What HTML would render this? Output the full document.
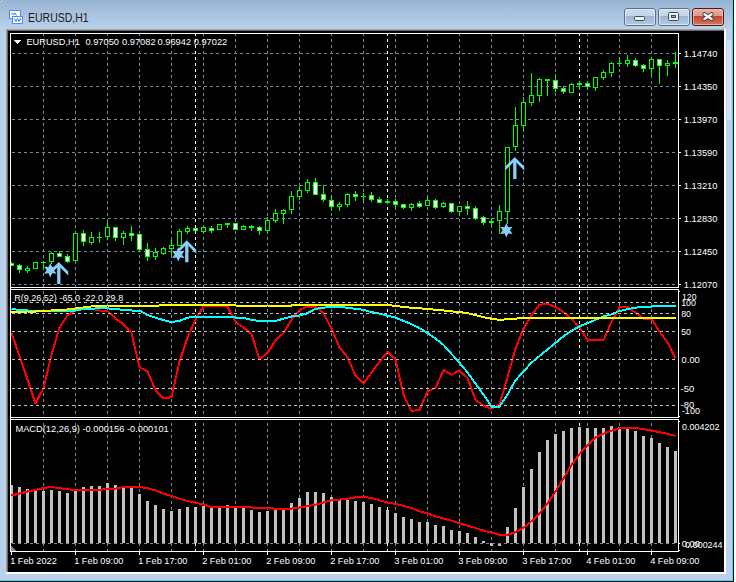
<!DOCTYPE html>
<html><head><meta charset="utf-8"><style>
html,body{margin:0;padding:0;width:736px;height:582px;overflow:hidden;background:#b9d1ea;}
#win{position:absolute;left:0;top:0;width:736px;height:582px;}
svg{position:absolute;left:0;top:0;}
text{font-family:"Liberation Sans",sans-serif;}
</style></head><body><div id="win">
<svg width="736" height="582" viewBox="0 0 736 582" shape-rendering="crispEdges">
<defs>
<linearGradient id="tb" x1="0" y1="0" x2="0" y2="1">
<stop offset="0" stop-color="#98b4d3"/><stop offset="1" stop-color="#bad2eb"/>
</linearGradient>
<linearGradient id="bh" x1="0" y1="0" x2="0" y2="1">
<stop offset="0" stop-color="#cddcee"/><stop offset="0.42" stop-color="#c3d5ea"/><stop offset="0.45" stop-color="#9ab4d3"/><stop offset="1" stop-color="#b8cde5"/>
</linearGradient>
<linearGradient id="ch" x1="0" y1="0" x2="0" y2="1">
<stop offset="0" stop-color="#eab0a4"/><stop offset="0.42" stop-color="#e39a8a"/><stop offset="0.45" stop-color="#c2452c"/><stop offset="1" stop-color="#d97a62"/>
</linearGradient>
</defs>
<rect x="0" y="0" width="736" height="582" fill="#b9d1ea"/>
<rect x="0" y="0" width="736" height="29" fill="url(#tb)"/>
<rect x="0" y="0" width="1" height="1" fill="#6e6e6e"/><rect x="1" y="0" width="1" height="1" fill="#eeeeee"/><rect x="0" y="1" width="1" height="1" fill="#eeeeee"/>
<rect x="726" y="29" width="6" height="551" fill="#bcd3eb"/>
<rect x="727" y="40" width="4" height="80" fill="#d2e2f2"/>
<rect x="732" y="0" width="1" height="581" fill="#3fd6f2"/>
<rect x="733" y="0" width="1" height="582" fill="#101010"/>
<rect x="734" y="0" width="2" height="582" fill="#ffffff"/>
<rect x="0" y="580" width="733" height="1" fill="#3fd6f2"/>
<rect x="0" y="581" width="734" height="1" fill="#101010"/>
<!-- client edge -->
<rect x="6" y="29" width="720" height="545" fill="#ffffff"/>
<rect x="6" y="29" width="718" height="543" fill="#a0a0a0"/>
<rect x="7" y="30" width="717" height="542" fill="#696969"/>
<rect x="8" y="31" width="716" height="541" fill="#000000"/>
<!-- title -->
<g id="icon">
<rect x="9.5" y="10.5" width="11" height="8" fill="#ffffff" stroke="#4d8cf5" stroke-width="1"/>
<rect x="12.5" y="16.5" width="10" height="7" fill="#ffffff" stroke="#4d8cf5" stroke-width="1"/>
<path d="M14.5 18.5L16 21.5L17.5 18.5L19 21.5L20.5 18.5L21 20" fill="none" stroke="#3d7be0" stroke-width="1" shape-rendering="geometricPrecision"/>
<path d="M11 14.5L12.5 13L13.5 15L15 13L16.5 15.5" fill="none" stroke="#3d7be0" stroke-width="1" shape-rendering="geometricPrecision"/>
</g>
<text x="28" y="22" font-size="12" fill="#1a1a1a" transform="translate(28 0) scale(0.875 1) translate(-28 0)">EURUSD,H1</text>
<!-- buttons -->
<rect x="624.5" y="8.5" width="31" height="17" rx="2.5" fill="url(#bh)" stroke="#5a6f8c" shape-rendering="geometricPrecision"/>
<rect x="658.5" y="8.5" width="31" height="17" rx="2.5" fill="url(#bh)" stroke="#5a6f8c" shape-rendering="geometricPrecision"/>
<rect x="692.5" y="8.5" width="31" height="17" rx="2.5" fill="url(#ch)" stroke="#4a1820" shape-rendering="geometricPrecision"/>
<rect x="625.5" y="9.5" width="29" height="15" rx="1.5" fill="none" stroke="#e8f0fa" stroke-opacity="0.7" shape-rendering="geometricPrecision"/>
<rect x="659.5" y="9.5" width="29" height="15" rx="1.5" fill="none" stroke="#e8f0fa" stroke-opacity="0.7" shape-rendering="geometricPrecision"/>
<rect x="693.5" y="9.5" width="29" height="15" rx="1.5" fill="none" stroke="#f4c8bc" stroke-opacity="0.7" shape-rendering="geometricPrecision"/>
<rect x="634.5" y="16.5" width="10" height="4" rx="1" fill="#f2f2f2" stroke="#3a4a5e" shape-rendering="geometricPrecision"/>
<rect x="668.5" y="12.5" width="10" height="8" rx="1" fill="#f2f2f2" stroke="#3a4a5e" shape-rendering="geometricPrecision"/>
<rect x="671.5" y="15.5" width="4" height="2" fill="#8aa4c4" stroke="#3a4a5e" shape-rendering="geometricPrecision"/>
<path d="M704.4 14.2 L711.6 19.0 M711.6 14.2 L704.4 19.0" stroke="#3a3a48" stroke-width="4.2" stroke-linecap="round" shape-rendering="geometricPrecision"/>
<path d="M704.4 14.2 L711.6 19.0 M711.6 14.2 L704.4 19.0" stroke="#f4f4f4" stroke-width="2.4" stroke-linecap="round" shape-rendering="geometricPrecision"/>
<path d="M14 40h7v1h-1v1h-1v1h-1v1h-1v-1h-1v-1h-1v-1h-1z" fill="#ffffff"/>
<!-- frames -->
<g fill="#ffffff">
<rect x="10" y="33" width="669" height="1"/>
<rect x="10" y="287" width="669" height="1"/>
<rect x="10" y="289" width="669" height="1"/>
<rect x="10" y="417" width="669" height="1"/>
<rect x="10" y="419" width="669" height="1"/>
<rect x="10" y="551" width="669" height="1"/>
<rect x="10" y="33" width="1" height="519"/>
<rect x="678" y="33" width="1" height="255"/>
<rect x="678" y="289" width="1" height="129"/>
<rect x="678" y="419" width="1" height="133"/>
</g>
<path d="M43 34h1v2h-1zM43 39h1v3h-1zM43 45h1v3h-1zM43 51h1v3h-1zM43 57h1v3h-1zM43 63h1v3h-1zM43 69h1v3h-1zM43 75h1v3h-1zM43 81h1v3h-1zM43 87h1v3h-1zM43 93h1v3h-1zM43 99h1v3h-1zM43 105h1v3h-1zM43 111h1v3h-1zM43 117h1v3h-1zM43 123h1v3h-1zM43 129h1v3h-1zM43 135h1v3h-1zM43 141h1v3h-1zM43 147h1v3h-1zM43 153h1v3h-1zM43 159h1v3h-1zM43 165h1v3h-1zM43 171h1v3h-1zM43 177h1v3h-1zM43 183h1v3h-1zM43 189h1v3h-1zM43 195h1v3h-1zM43 201h1v3h-1zM43 207h1v3h-1zM43 213h1v3h-1zM43 219h1v3h-1zM43 225h1v3h-1zM43 231h1v3h-1zM43 237h1v3h-1zM43 243h1v3h-1zM43 249h1v3h-1zM43 255h1v3h-1zM43 261h1v3h-1zM43 267h1v3h-1zM43 273h1v3h-1zM43 279h1v3h-1zM43 285h1v2h-1zM43 291h1v3h-1zM43 297h1v3h-1zM43 303h1v3h-1zM43 309h1v3h-1zM43 315h1v3h-1zM43 321h1v3h-1zM43 327h1v3h-1zM43 333h1v3h-1zM43 339h1v3h-1zM43 345h1v3h-1zM43 351h1v3h-1zM43 357h1v3h-1zM43 363h1v3h-1zM43 369h1v3h-1zM43 375h1v3h-1zM43 381h1v3h-1zM43 387h1v3h-1zM43 393h1v3h-1zM43 399h1v3h-1zM43 405h1v3h-1zM43 411h1v3h-1zM43 423h1v3h-1zM43 429h1v3h-1zM43 435h1v3h-1zM43 441h1v3h-1zM43 447h1v3h-1zM43 453h1v3h-1zM43 459h1v3h-1zM43 465h1v3h-1zM43 471h1v3h-1zM43 477h1v3h-1zM43 483h1v3h-1zM43 489h1v3h-1zM43 495h1v3h-1zM43 501h1v3h-1zM43 507h1v3h-1zM43 513h1v3h-1zM43 519h1v3h-1zM43 525h1v3h-1zM43 531h1v3h-1zM43 537h1v3h-1zM43 543h1v3h-1zM43 549h1v2h-1zM75 34h1v2h-1zM75 39h1v3h-1zM75 45h1v3h-1zM75 51h1v3h-1zM75 57h1v3h-1zM75 63h1v3h-1zM75 69h1v3h-1zM75 75h1v3h-1zM75 81h1v3h-1zM75 87h1v3h-1zM75 93h1v3h-1zM75 99h1v3h-1zM75 105h1v3h-1zM75 111h1v3h-1zM75 117h1v3h-1zM75 123h1v3h-1zM75 129h1v3h-1zM75 135h1v3h-1zM75 141h1v3h-1zM75 147h1v3h-1zM75 153h1v3h-1zM75 159h1v3h-1zM75 165h1v3h-1zM75 171h1v3h-1zM75 177h1v3h-1zM75 183h1v3h-1zM75 189h1v3h-1zM75 195h1v3h-1zM75 201h1v3h-1zM75 207h1v3h-1zM75 213h1v3h-1zM75 219h1v3h-1zM75 225h1v3h-1zM75 231h1v3h-1zM75 237h1v3h-1zM75 243h1v3h-1zM75 249h1v3h-1zM75 255h1v3h-1zM75 261h1v3h-1zM75 267h1v3h-1zM75 273h1v3h-1zM75 279h1v3h-1zM75 285h1v2h-1zM75 291h1v3h-1zM75 297h1v3h-1zM75 303h1v3h-1zM75 309h1v3h-1zM75 315h1v3h-1zM75 321h1v3h-1zM75 327h1v3h-1zM75 333h1v3h-1zM75 339h1v3h-1zM75 345h1v3h-1zM75 351h1v3h-1zM75 357h1v3h-1zM75 363h1v3h-1zM75 369h1v3h-1zM75 375h1v3h-1zM75 381h1v3h-1zM75 387h1v3h-1zM75 393h1v3h-1zM75 399h1v3h-1zM75 405h1v3h-1zM75 411h1v3h-1zM75 423h1v3h-1zM75 429h1v3h-1zM75 435h1v3h-1zM75 441h1v3h-1zM75 447h1v3h-1zM75 453h1v3h-1zM75 459h1v3h-1zM75 465h1v3h-1zM75 471h1v3h-1zM75 477h1v3h-1zM75 483h1v3h-1zM75 489h1v3h-1zM75 495h1v3h-1zM75 501h1v3h-1zM75 507h1v3h-1zM75 513h1v3h-1zM75 519h1v3h-1zM75 525h1v3h-1zM75 531h1v3h-1zM75 537h1v3h-1zM75 543h1v3h-1zM75 549h1v2h-1zM107 34h1v2h-1zM107 39h1v3h-1zM107 45h1v3h-1zM107 51h1v3h-1zM107 57h1v3h-1zM107 63h1v3h-1zM107 69h1v3h-1zM107 75h1v3h-1zM107 81h1v3h-1zM107 87h1v3h-1zM107 93h1v3h-1zM107 99h1v3h-1zM107 105h1v3h-1zM107 111h1v3h-1zM107 117h1v3h-1zM107 123h1v3h-1zM107 129h1v3h-1zM107 135h1v3h-1zM107 141h1v3h-1zM107 147h1v3h-1zM107 153h1v3h-1zM107 159h1v3h-1zM107 165h1v3h-1zM107 171h1v3h-1zM107 177h1v3h-1zM107 183h1v3h-1zM107 189h1v3h-1zM107 195h1v3h-1zM107 201h1v3h-1zM107 207h1v3h-1zM107 213h1v3h-1zM107 219h1v3h-1zM107 225h1v3h-1zM107 231h1v3h-1zM107 237h1v3h-1zM107 243h1v3h-1zM107 249h1v3h-1zM107 255h1v3h-1zM107 261h1v3h-1zM107 267h1v3h-1zM107 273h1v3h-1zM107 279h1v3h-1zM107 285h1v2h-1zM107 291h1v3h-1zM107 297h1v3h-1zM107 303h1v3h-1zM107 309h1v3h-1zM107 315h1v3h-1zM107 321h1v3h-1zM107 327h1v3h-1zM107 333h1v3h-1zM107 339h1v3h-1zM107 345h1v3h-1zM107 351h1v3h-1zM107 357h1v3h-1zM107 363h1v3h-1zM107 369h1v3h-1zM107 375h1v3h-1zM107 381h1v3h-1zM107 387h1v3h-1zM107 393h1v3h-1zM107 399h1v3h-1zM107 405h1v3h-1zM107 411h1v3h-1zM107 423h1v3h-1zM107 429h1v3h-1zM107 435h1v3h-1zM107 441h1v3h-1zM107 447h1v3h-1zM107 453h1v3h-1zM107 459h1v3h-1zM107 465h1v3h-1zM107 471h1v3h-1zM107 477h1v3h-1zM107 483h1v3h-1zM107 489h1v3h-1zM107 495h1v3h-1zM107 501h1v3h-1zM107 507h1v3h-1zM107 513h1v3h-1zM107 519h1v3h-1zM107 525h1v3h-1zM107 531h1v3h-1zM107 537h1v3h-1zM107 543h1v3h-1zM107 549h1v2h-1zM139 34h1v2h-1zM139 39h1v3h-1zM139 45h1v3h-1zM139 51h1v3h-1zM139 57h1v3h-1zM139 63h1v3h-1zM139 69h1v3h-1zM139 75h1v3h-1zM139 81h1v3h-1zM139 87h1v3h-1zM139 93h1v3h-1zM139 99h1v3h-1zM139 105h1v3h-1zM139 111h1v3h-1zM139 117h1v3h-1zM139 123h1v3h-1zM139 129h1v3h-1zM139 135h1v3h-1zM139 141h1v3h-1zM139 147h1v3h-1zM139 153h1v3h-1zM139 159h1v3h-1zM139 165h1v3h-1zM139 171h1v3h-1zM139 177h1v3h-1zM139 183h1v3h-1zM139 189h1v3h-1zM139 195h1v3h-1zM139 201h1v3h-1zM139 207h1v3h-1zM139 213h1v3h-1zM139 219h1v3h-1zM139 225h1v3h-1zM139 231h1v3h-1zM139 237h1v3h-1zM139 243h1v3h-1zM139 249h1v3h-1zM139 255h1v3h-1zM139 261h1v3h-1zM139 267h1v3h-1zM139 273h1v3h-1zM139 279h1v3h-1zM139 285h1v2h-1zM139 291h1v3h-1zM139 297h1v3h-1zM139 303h1v3h-1zM139 309h1v3h-1zM139 315h1v3h-1zM139 321h1v3h-1zM139 327h1v3h-1zM139 333h1v3h-1zM139 339h1v3h-1zM139 345h1v3h-1zM139 351h1v3h-1zM139 357h1v3h-1zM139 363h1v3h-1zM139 369h1v3h-1zM139 375h1v3h-1zM139 381h1v3h-1zM139 387h1v3h-1zM139 393h1v3h-1zM139 399h1v3h-1zM139 405h1v3h-1zM139 411h1v3h-1zM139 423h1v3h-1zM139 429h1v3h-1zM139 435h1v3h-1zM139 441h1v3h-1zM139 447h1v3h-1zM139 453h1v3h-1zM139 459h1v3h-1zM139 465h1v3h-1zM139 471h1v3h-1zM139 477h1v3h-1zM139 483h1v3h-1zM139 489h1v3h-1zM139 495h1v3h-1zM139 501h1v3h-1zM139 507h1v3h-1zM139 513h1v3h-1zM139 519h1v3h-1zM139 525h1v3h-1zM139 531h1v3h-1zM139 537h1v3h-1zM139 543h1v3h-1zM139 549h1v2h-1zM171 34h1v2h-1zM171 39h1v3h-1zM171 45h1v3h-1zM171 51h1v3h-1zM171 57h1v3h-1zM171 63h1v3h-1zM171 69h1v3h-1zM171 75h1v3h-1zM171 81h1v3h-1zM171 87h1v3h-1zM171 93h1v3h-1zM171 99h1v3h-1zM171 105h1v3h-1zM171 111h1v3h-1zM171 117h1v3h-1zM171 123h1v3h-1zM171 129h1v3h-1zM171 135h1v3h-1zM171 141h1v3h-1zM171 147h1v3h-1zM171 153h1v3h-1zM171 159h1v3h-1zM171 165h1v3h-1zM171 171h1v3h-1zM171 177h1v3h-1zM171 183h1v3h-1zM171 189h1v3h-1zM171 195h1v3h-1zM171 201h1v3h-1zM171 207h1v3h-1zM171 213h1v3h-1zM171 219h1v3h-1zM171 225h1v3h-1zM171 231h1v3h-1zM171 237h1v3h-1zM171 243h1v3h-1zM171 249h1v3h-1zM171 255h1v3h-1zM171 261h1v3h-1zM171 267h1v3h-1zM171 273h1v3h-1zM171 279h1v3h-1zM171 285h1v2h-1zM171 291h1v3h-1zM171 297h1v3h-1zM171 303h1v3h-1zM171 309h1v3h-1zM171 315h1v3h-1zM171 321h1v3h-1zM171 327h1v3h-1zM171 333h1v3h-1zM171 339h1v3h-1zM171 345h1v3h-1zM171 351h1v3h-1zM171 357h1v3h-1zM171 363h1v3h-1zM171 369h1v3h-1zM171 375h1v3h-1zM171 381h1v3h-1zM171 387h1v3h-1zM171 393h1v3h-1zM171 399h1v3h-1zM171 405h1v3h-1zM171 411h1v3h-1zM171 423h1v3h-1zM171 429h1v3h-1zM171 435h1v3h-1zM171 441h1v3h-1zM171 447h1v3h-1zM171 453h1v3h-1zM171 459h1v3h-1zM171 465h1v3h-1zM171 471h1v3h-1zM171 477h1v3h-1zM171 483h1v3h-1zM171 489h1v3h-1zM171 495h1v3h-1zM171 501h1v3h-1zM171 507h1v3h-1zM171 513h1v3h-1zM171 519h1v3h-1zM171 525h1v3h-1zM171 531h1v3h-1zM171 537h1v3h-1zM171 543h1v3h-1zM171 549h1v2h-1zM203 34h1v2h-1zM203 39h1v3h-1zM203 45h1v3h-1zM203 51h1v3h-1zM203 57h1v3h-1zM203 63h1v3h-1zM203 69h1v3h-1zM203 75h1v3h-1zM203 81h1v3h-1zM203 87h1v3h-1zM203 93h1v3h-1zM203 99h1v3h-1zM203 105h1v3h-1zM203 111h1v3h-1zM203 117h1v3h-1zM203 123h1v3h-1zM203 129h1v3h-1zM203 135h1v3h-1zM203 141h1v3h-1zM203 147h1v3h-1zM203 153h1v3h-1zM203 159h1v3h-1zM203 165h1v3h-1zM203 171h1v3h-1zM203 177h1v3h-1zM203 183h1v3h-1zM203 189h1v3h-1zM203 195h1v3h-1zM203 201h1v3h-1zM203 207h1v3h-1zM203 213h1v3h-1zM203 219h1v3h-1zM203 225h1v3h-1zM203 231h1v3h-1zM203 237h1v3h-1zM203 243h1v3h-1zM203 249h1v3h-1zM203 255h1v3h-1zM203 261h1v3h-1zM203 267h1v3h-1zM203 273h1v3h-1zM203 279h1v3h-1zM203 285h1v2h-1zM203 291h1v3h-1zM203 297h1v3h-1zM203 303h1v3h-1zM203 309h1v3h-1zM203 315h1v3h-1zM203 321h1v3h-1zM203 327h1v3h-1zM203 333h1v3h-1zM203 339h1v3h-1zM203 345h1v3h-1zM203 351h1v3h-1zM203 357h1v3h-1zM203 363h1v3h-1zM203 369h1v3h-1zM203 375h1v3h-1zM203 381h1v3h-1zM203 387h1v3h-1zM203 393h1v3h-1zM203 399h1v3h-1zM203 405h1v3h-1zM203 411h1v3h-1zM203 423h1v3h-1zM203 429h1v3h-1zM203 435h1v3h-1zM203 441h1v3h-1zM203 447h1v3h-1zM203 453h1v3h-1zM203 459h1v3h-1zM203 465h1v3h-1zM203 471h1v3h-1zM203 477h1v3h-1zM203 483h1v3h-1zM203 489h1v3h-1zM203 495h1v3h-1zM203 501h1v3h-1zM203 507h1v3h-1zM203 513h1v3h-1zM203 519h1v3h-1zM203 525h1v3h-1zM203 531h1v3h-1zM203 537h1v3h-1zM203 543h1v3h-1zM203 549h1v2h-1zM235 34h1v2h-1zM235 39h1v3h-1zM235 45h1v3h-1zM235 51h1v3h-1zM235 57h1v3h-1zM235 63h1v3h-1zM235 69h1v3h-1zM235 75h1v3h-1zM235 81h1v3h-1zM235 87h1v3h-1zM235 93h1v3h-1zM235 99h1v3h-1zM235 105h1v3h-1zM235 111h1v3h-1zM235 117h1v3h-1zM235 123h1v3h-1zM235 129h1v3h-1zM235 135h1v3h-1zM235 141h1v3h-1zM235 147h1v3h-1zM235 153h1v3h-1zM235 159h1v3h-1zM235 165h1v3h-1zM235 171h1v3h-1zM235 177h1v3h-1zM235 183h1v3h-1zM235 189h1v3h-1zM235 195h1v3h-1zM235 201h1v3h-1zM235 207h1v3h-1zM235 213h1v3h-1zM235 219h1v3h-1zM235 225h1v3h-1zM235 231h1v3h-1zM235 237h1v3h-1zM235 243h1v3h-1zM235 249h1v3h-1zM235 255h1v3h-1zM235 261h1v3h-1zM235 267h1v3h-1zM235 273h1v3h-1zM235 279h1v3h-1zM235 285h1v2h-1zM235 291h1v3h-1zM235 297h1v3h-1zM235 303h1v3h-1zM235 309h1v3h-1zM235 315h1v3h-1zM235 321h1v3h-1zM235 327h1v3h-1zM235 333h1v3h-1zM235 339h1v3h-1zM235 345h1v3h-1zM235 351h1v3h-1zM235 357h1v3h-1zM235 363h1v3h-1zM235 369h1v3h-1zM235 375h1v3h-1zM235 381h1v3h-1zM235 387h1v3h-1zM235 393h1v3h-1zM235 399h1v3h-1zM235 405h1v3h-1zM235 411h1v3h-1zM235 423h1v3h-1zM235 429h1v3h-1zM235 435h1v3h-1zM235 441h1v3h-1zM235 447h1v3h-1zM235 453h1v3h-1zM235 459h1v3h-1zM235 465h1v3h-1zM235 471h1v3h-1zM235 477h1v3h-1zM235 483h1v3h-1zM235 489h1v3h-1zM235 495h1v3h-1zM235 501h1v3h-1zM235 507h1v3h-1zM235 513h1v3h-1zM235 519h1v3h-1zM235 525h1v3h-1zM235 531h1v3h-1zM235 537h1v3h-1zM235 543h1v3h-1zM235 549h1v2h-1zM267 34h1v2h-1zM267 39h1v3h-1zM267 45h1v3h-1zM267 51h1v3h-1zM267 57h1v3h-1zM267 63h1v3h-1zM267 69h1v3h-1zM267 75h1v3h-1zM267 81h1v3h-1zM267 87h1v3h-1zM267 93h1v3h-1zM267 99h1v3h-1zM267 105h1v3h-1zM267 111h1v3h-1zM267 117h1v3h-1zM267 123h1v3h-1zM267 129h1v3h-1zM267 135h1v3h-1zM267 141h1v3h-1zM267 147h1v3h-1zM267 153h1v3h-1zM267 159h1v3h-1zM267 165h1v3h-1zM267 171h1v3h-1zM267 177h1v3h-1zM267 183h1v3h-1zM267 189h1v3h-1zM267 195h1v3h-1zM267 201h1v3h-1zM267 207h1v3h-1zM267 213h1v3h-1zM267 219h1v3h-1zM267 225h1v3h-1zM267 231h1v3h-1zM267 237h1v3h-1zM267 243h1v3h-1zM267 249h1v3h-1zM267 255h1v3h-1zM267 261h1v3h-1zM267 267h1v3h-1zM267 273h1v3h-1zM267 279h1v3h-1zM267 285h1v2h-1zM267 291h1v3h-1zM267 297h1v3h-1zM267 303h1v3h-1zM267 309h1v3h-1zM267 315h1v3h-1zM267 321h1v3h-1zM267 327h1v3h-1zM267 333h1v3h-1zM267 339h1v3h-1zM267 345h1v3h-1zM267 351h1v3h-1zM267 357h1v3h-1zM267 363h1v3h-1zM267 369h1v3h-1zM267 375h1v3h-1zM267 381h1v3h-1zM267 387h1v3h-1zM267 393h1v3h-1zM267 399h1v3h-1zM267 405h1v3h-1zM267 411h1v3h-1zM267 423h1v3h-1zM267 429h1v3h-1zM267 435h1v3h-1zM267 441h1v3h-1zM267 447h1v3h-1zM267 453h1v3h-1zM267 459h1v3h-1zM267 465h1v3h-1zM267 471h1v3h-1zM267 477h1v3h-1zM267 483h1v3h-1zM267 489h1v3h-1zM267 495h1v3h-1zM267 501h1v3h-1zM267 507h1v3h-1zM267 513h1v3h-1zM267 519h1v3h-1zM267 525h1v3h-1zM267 531h1v3h-1zM267 537h1v3h-1zM267 543h1v3h-1zM267 549h1v2h-1zM299 34h1v2h-1zM299 39h1v3h-1zM299 45h1v3h-1zM299 51h1v3h-1zM299 57h1v3h-1zM299 63h1v3h-1zM299 69h1v3h-1zM299 75h1v3h-1zM299 81h1v3h-1zM299 87h1v3h-1zM299 93h1v3h-1zM299 99h1v3h-1zM299 105h1v3h-1zM299 111h1v3h-1zM299 117h1v3h-1zM299 123h1v3h-1zM299 129h1v3h-1zM299 135h1v3h-1zM299 141h1v3h-1zM299 147h1v3h-1zM299 153h1v3h-1zM299 159h1v3h-1zM299 165h1v3h-1zM299 171h1v3h-1zM299 177h1v3h-1zM299 183h1v3h-1zM299 189h1v3h-1zM299 195h1v3h-1zM299 201h1v3h-1zM299 207h1v3h-1zM299 213h1v3h-1zM299 219h1v3h-1zM299 225h1v3h-1zM299 231h1v3h-1zM299 237h1v3h-1zM299 243h1v3h-1zM299 249h1v3h-1zM299 255h1v3h-1zM299 261h1v3h-1zM299 267h1v3h-1zM299 273h1v3h-1zM299 279h1v3h-1zM299 285h1v2h-1zM299 291h1v3h-1zM299 297h1v3h-1zM299 303h1v3h-1zM299 309h1v3h-1zM299 315h1v3h-1zM299 321h1v3h-1zM299 327h1v3h-1zM299 333h1v3h-1zM299 339h1v3h-1zM299 345h1v3h-1zM299 351h1v3h-1zM299 357h1v3h-1zM299 363h1v3h-1zM299 369h1v3h-1zM299 375h1v3h-1zM299 381h1v3h-1zM299 387h1v3h-1zM299 393h1v3h-1zM299 399h1v3h-1zM299 405h1v3h-1zM299 411h1v3h-1zM299 423h1v3h-1zM299 429h1v3h-1zM299 435h1v3h-1zM299 441h1v3h-1zM299 447h1v3h-1zM299 453h1v3h-1zM299 459h1v3h-1zM299 465h1v3h-1zM299 471h1v3h-1zM299 477h1v3h-1zM299 483h1v3h-1zM299 489h1v3h-1zM299 495h1v3h-1zM299 501h1v3h-1zM299 507h1v3h-1zM299 513h1v3h-1zM299 519h1v3h-1zM299 525h1v3h-1zM299 531h1v3h-1zM299 537h1v3h-1zM299 543h1v3h-1zM299 549h1v2h-1zM331 34h1v2h-1zM331 39h1v3h-1zM331 45h1v3h-1zM331 51h1v3h-1zM331 57h1v3h-1zM331 63h1v3h-1zM331 69h1v3h-1zM331 75h1v3h-1zM331 81h1v3h-1zM331 87h1v3h-1zM331 93h1v3h-1zM331 99h1v3h-1zM331 105h1v3h-1zM331 111h1v3h-1zM331 117h1v3h-1zM331 123h1v3h-1zM331 129h1v3h-1zM331 135h1v3h-1zM331 141h1v3h-1zM331 147h1v3h-1zM331 153h1v3h-1zM331 159h1v3h-1zM331 165h1v3h-1zM331 171h1v3h-1zM331 177h1v3h-1zM331 183h1v3h-1zM331 189h1v3h-1zM331 195h1v3h-1zM331 201h1v3h-1zM331 207h1v3h-1zM331 213h1v3h-1zM331 219h1v3h-1zM331 225h1v3h-1zM331 231h1v3h-1zM331 237h1v3h-1zM331 243h1v3h-1zM331 249h1v3h-1zM331 255h1v3h-1zM331 261h1v3h-1zM331 267h1v3h-1zM331 273h1v3h-1zM331 279h1v3h-1zM331 285h1v2h-1zM331 291h1v3h-1zM331 297h1v3h-1zM331 303h1v3h-1zM331 309h1v3h-1zM331 315h1v3h-1zM331 321h1v3h-1zM331 327h1v3h-1zM331 333h1v3h-1zM331 339h1v3h-1zM331 345h1v3h-1zM331 351h1v3h-1zM331 357h1v3h-1zM331 363h1v3h-1zM331 369h1v3h-1zM331 375h1v3h-1zM331 381h1v3h-1zM331 387h1v3h-1zM331 393h1v3h-1zM331 399h1v3h-1zM331 405h1v3h-1zM331 411h1v3h-1zM331 423h1v3h-1zM331 429h1v3h-1zM331 435h1v3h-1zM331 441h1v3h-1zM331 447h1v3h-1zM331 453h1v3h-1zM331 459h1v3h-1zM331 465h1v3h-1zM331 471h1v3h-1zM331 477h1v3h-1zM331 483h1v3h-1zM331 489h1v3h-1zM331 495h1v3h-1zM331 501h1v3h-1zM331 507h1v3h-1zM331 513h1v3h-1zM331 519h1v3h-1zM331 525h1v3h-1zM331 531h1v3h-1zM331 537h1v3h-1zM331 543h1v3h-1zM331 549h1v2h-1zM363 34h1v2h-1zM363 39h1v3h-1zM363 45h1v3h-1zM363 51h1v3h-1zM363 57h1v3h-1zM363 63h1v3h-1zM363 69h1v3h-1zM363 75h1v3h-1zM363 81h1v3h-1zM363 87h1v3h-1zM363 93h1v3h-1zM363 99h1v3h-1zM363 105h1v3h-1zM363 111h1v3h-1zM363 117h1v3h-1zM363 123h1v3h-1zM363 129h1v3h-1zM363 135h1v3h-1zM363 141h1v3h-1zM363 147h1v3h-1zM363 153h1v3h-1zM363 159h1v3h-1zM363 165h1v3h-1zM363 171h1v3h-1zM363 177h1v3h-1zM363 183h1v3h-1zM363 189h1v3h-1zM363 195h1v3h-1zM363 201h1v3h-1zM363 207h1v3h-1zM363 213h1v3h-1zM363 219h1v3h-1zM363 225h1v3h-1zM363 231h1v3h-1zM363 237h1v3h-1zM363 243h1v3h-1zM363 249h1v3h-1zM363 255h1v3h-1zM363 261h1v3h-1zM363 267h1v3h-1zM363 273h1v3h-1zM363 279h1v3h-1zM363 285h1v2h-1zM363 291h1v3h-1zM363 297h1v3h-1zM363 303h1v3h-1zM363 309h1v3h-1zM363 315h1v3h-1zM363 321h1v3h-1zM363 327h1v3h-1zM363 333h1v3h-1zM363 339h1v3h-1zM363 345h1v3h-1zM363 351h1v3h-1zM363 357h1v3h-1zM363 363h1v3h-1zM363 369h1v3h-1zM363 375h1v3h-1zM363 381h1v3h-1zM363 387h1v3h-1zM363 393h1v3h-1zM363 399h1v3h-1zM363 405h1v3h-1zM363 411h1v3h-1zM363 423h1v3h-1zM363 429h1v3h-1zM363 435h1v3h-1zM363 441h1v3h-1zM363 447h1v3h-1zM363 453h1v3h-1zM363 459h1v3h-1zM363 465h1v3h-1zM363 471h1v3h-1zM363 477h1v3h-1zM363 483h1v3h-1zM363 489h1v3h-1zM363 495h1v3h-1zM363 501h1v3h-1zM363 507h1v3h-1zM363 513h1v3h-1zM363 519h1v3h-1zM363 525h1v3h-1zM363 531h1v3h-1zM363 537h1v3h-1zM363 543h1v3h-1zM363 549h1v2h-1zM395 34h1v2h-1zM395 39h1v3h-1zM395 45h1v3h-1zM395 51h1v3h-1zM395 57h1v3h-1zM395 63h1v3h-1zM395 69h1v3h-1zM395 75h1v3h-1zM395 81h1v3h-1zM395 87h1v3h-1zM395 93h1v3h-1zM395 99h1v3h-1zM395 105h1v3h-1zM395 111h1v3h-1zM395 117h1v3h-1zM395 123h1v3h-1zM395 129h1v3h-1zM395 135h1v3h-1zM395 141h1v3h-1zM395 147h1v3h-1zM395 153h1v3h-1zM395 159h1v3h-1zM395 165h1v3h-1zM395 171h1v3h-1zM395 177h1v3h-1zM395 183h1v3h-1zM395 189h1v3h-1zM395 195h1v3h-1zM395 201h1v3h-1zM395 207h1v3h-1zM395 213h1v3h-1zM395 219h1v3h-1zM395 225h1v3h-1zM395 231h1v3h-1zM395 237h1v3h-1zM395 243h1v3h-1zM395 249h1v3h-1zM395 255h1v3h-1zM395 261h1v3h-1zM395 267h1v3h-1zM395 273h1v3h-1zM395 279h1v3h-1zM395 285h1v2h-1zM395 291h1v3h-1zM395 297h1v3h-1zM395 303h1v3h-1zM395 309h1v3h-1zM395 315h1v3h-1zM395 321h1v3h-1zM395 327h1v3h-1zM395 333h1v3h-1zM395 339h1v3h-1zM395 345h1v3h-1zM395 351h1v3h-1zM395 357h1v3h-1zM395 363h1v3h-1zM395 369h1v3h-1zM395 375h1v3h-1zM395 381h1v3h-1zM395 387h1v3h-1zM395 393h1v3h-1zM395 399h1v3h-1zM395 405h1v3h-1zM395 411h1v3h-1zM395 423h1v3h-1zM395 429h1v3h-1zM395 435h1v3h-1zM395 441h1v3h-1zM395 447h1v3h-1zM395 453h1v3h-1zM395 459h1v3h-1zM395 465h1v3h-1zM395 471h1v3h-1zM395 477h1v3h-1zM395 483h1v3h-1zM395 489h1v3h-1zM395 495h1v3h-1zM395 501h1v3h-1zM395 507h1v3h-1zM395 513h1v3h-1zM395 519h1v3h-1zM395 525h1v3h-1zM395 531h1v3h-1zM395 537h1v3h-1zM395 543h1v3h-1zM395 549h1v2h-1zM427 34h1v2h-1zM427 39h1v3h-1zM427 45h1v3h-1zM427 51h1v3h-1zM427 57h1v3h-1zM427 63h1v3h-1zM427 69h1v3h-1zM427 75h1v3h-1zM427 81h1v3h-1zM427 87h1v3h-1zM427 93h1v3h-1zM427 99h1v3h-1zM427 105h1v3h-1zM427 111h1v3h-1zM427 117h1v3h-1zM427 123h1v3h-1zM427 129h1v3h-1zM427 135h1v3h-1zM427 141h1v3h-1zM427 147h1v3h-1zM427 153h1v3h-1zM427 159h1v3h-1zM427 165h1v3h-1zM427 171h1v3h-1zM427 177h1v3h-1zM427 183h1v3h-1zM427 189h1v3h-1zM427 195h1v3h-1zM427 201h1v3h-1zM427 207h1v3h-1zM427 213h1v3h-1zM427 219h1v3h-1zM427 225h1v3h-1zM427 231h1v3h-1zM427 237h1v3h-1zM427 243h1v3h-1zM427 249h1v3h-1zM427 255h1v3h-1zM427 261h1v3h-1zM427 267h1v3h-1zM427 273h1v3h-1zM427 279h1v3h-1zM427 285h1v2h-1zM427 291h1v3h-1zM427 297h1v3h-1zM427 303h1v3h-1zM427 309h1v3h-1zM427 315h1v3h-1zM427 321h1v3h-1zM427 327h1v3h-1zM427 333h1v3h-1zM427 339h1v3h-1zM427 345h1v3h-1zM427 351h1v3h-1zM427 357h1v3h-1zM427 363h1v3h-1zM427 369h1v3h-1zM427 375h1v3h-1zM427 381h1v3h-1zM427 387h1v3h-1zM427 393h1v3h-1zM427 399h1v3h-1zM427 405h1v3h-1zM427 411h1v3h-1zM427 423h1v3h-1zM427 429h1v3h-1zM427 435h1v3h-1zM427 441h1v3h-1zM427 447h1v3h-1zM427 453h1v3h-1zM427 459h1v3h-1zM427 465h1v3h-1zM427 471h1v3h-1zM427 477h1v3h-1zM427 483h1v3h-1zM427 489h1v3h-1zM427 495h1v3h-1zM427 501h1v3h-1zM427 507h1v3h-1zM427 513h1v3h-1zM427 519h1v3h-1zM427 525h1v3h-1zM427 531h1v3h-1zM427 537h1v3h-1zM427 543h1v3h-1zM427 549h1v2h-1zM459 34h1v2h-1zM459 39h1v3h-1zM459 45h1v3h-1zM459 51h1v3h-1zM459 57h1v3h-1zM459 63h1v3h-1zM459 69h1v3h-1zM459 75h1v3h-1zM459 81h1v3h-1zM459 87h1v3h-1zM459 93h1v3h-1zM459 99h1v3h-1zM459 105h1v3h-1zM459 111h1v3h-1zM459 117h1v3h-1zM459 123h1v3h-1zM459 129h1v3h-1zM459 135h1v3h-1zM459 141h1v3h-1zM459 147h1v3h-1zM459 153h1v3h-1zM459 159h1v3h-1zM459 165h1v3h-1zM459 171h1v3h-1zM459 177h1v3h-1zM459 183h1v3h-1zM459 189h1v3h-1zM459 195h1v3h-1zM459 201h1v3h-1zM459 207h1v3h-1zM459 213h1v3h-1zM459 219h1v3h-1zM459 225h1v3h-1zM459 231h1v3h-1zM459 237h1v3h-1zM459 243h1v3h-1zM459 249h1v3h-1zM459 255h1v3h-1zM459 261h1v3h-1zM459 267h1v3h-1zM459 273h1v3h-1zM459 279h1v3h-1zM459 285h1v2h-1zM459 291h1v3h-1zM459 297h1v3h-1zM459 303h1v3h-1zM459 309h1v3h-1zM459 315h1v3h-1zM459 321h1v3h-1zM459 327h1v3h-1zM459 333h1v3h-1zM459 339h1v3h-1zM459 345h1v3h-1zM459 351h1v3h-1zM459 357h1v3h-1zM459 363h1v3h-1zM459 369h1v3h-1zM459 375h1v3h-1zM459 381h1v3h-1zM459 387h1v3h-1zM459 393h1v3h-1zM459 399h1v3h-1zM459 405h1v3h-1zM459 411h1v3h-1zM459 423h1v3h-1zM459 429h1v3h-1zM459 435h1v3h-1zM459 441h1v3h-1zM459 447h1v3h-1zM459 453h1v3h-1zM459 459h1v3h-1zM459 465h1v3h-1zM459 471h1v3h-1zM459 477h1v3h-1zM459 483h1v3h-1zM459 489h1v3h-1zM459 495h1v3h-1zM459 501h1v3h-1zM459 507h1v3h-1zM459 513h1v3h-1zM459 519h1v3h-1zM459 525h1v3h-1zM459 531h1v3h-1zM459 537h1v3h-1zM459 543h1v3h-1zM459 549h1v2h-1zM491 34h1v2h-1zM491 39h1v3h-1zM491 45h1v3h-1zM491 51h1v3h-1zM491 57h1v3h-1zM491 63h1v3h-1zM491 69h1v3h-1zM491 75h1v3h-1zM491 81h1v3h-1zM491 87h1v3h-1zM491 93h1v3h-1zM491 99h1v3h-1zM491 105h1v3h-1zM491 111h1v3h-1zM491 117h1v3h-1zM491 123h1v3h-1zM491 129h1v3h-1zM491 135h1v3h-1zM491 141h1v3h-1zM491 147h1v3h-1zM491 153h1v3h-1zM491 159h1v3h-1zM491 165h1v3h-1zM491 171h1v3h-1zM491 177h1v3h-1zM491 183h1v3h-1zM491 189h1v3h-1zM491 195h1v3h-1zM491 201h1v3h-1zM491 207h1v3h-1zM491 213h1v3h-1zM491 219h1v3h-1zM491 225h1v3h-1zM491 231h1v3h-1zM491 237h1v3h-1zM491 243h1v3h-1zM491 249h1v3h-1zM491 255h1v3h-1zM491 261h1v3h-1zM491 267h1v3h-1zM491 273h1v3h-1zM491 279h1v3h-1zM491 285h1v2h-1zM491 291h1v3h-1zM491 297h1v3h-1zM491 303h1v3h-1zM491 309h1v3h-1zM491 315h1v3h-1zM491 321h1v3h-1zM491 327h1v3h-1zM491 333h1v3h-1zM491 339h1v3h-1zM491 345h1v3h-1zM491 351h1v3h-1zM491 357h1v3h-1zM491 363h1v3h-1zM491 369h1v3h-1zM491 375h1v3h-1zM491 381h1v3h-1zM491 387h1v3h-1zM491 393h1v3h-1zM491 399h1v3h-1zM491 405h1v3h-1zM491 411h1v3h-1zM491 423h1v3h-1zM491 429h1v3h-1zM491 435h1v3h-1zM491 441h1v3h-1zM491 447h1v3h-1zM491 453h1v3h-1zM491 459h1v3h-1zM491 465h1v3h-1zM491 471h1v3h-1zM491 477h1v3h-1zM491 483h1v3h-1zM491 489h1v3h-1zM491 495h1v3h-1zM491 501h1v3h-1zM491 507h1v3h-1zM491 513h1v3h-1zM491 519h1v3h-1zM491 525h1v3h-1zM491 531h1v3h-1zM491 537h1v3h-1zM491 543h1v3h-1zM491 549h1v2h-1zM523 34h1v2h-1zM523 39h1v3h-1zM523 45h1v3h-1zM523 51h1v3h-1zM523 57h1v3h-1zM523 63h1v3h-1zM523 69h1v3h-1zM523 75h1v3h-1zM523 81h1v3h-1zM523 87h1v3h-1zM523 93h1v3h-1zM523 99h1v3h-1zM523 105h1v3h-1zM523 111h1v3h-1zM523 117h1v3h-1zM523 123h1v3h-1zM523 129h1v3h-1zM523 135h1v3h-1zM523 141h1v3h-1zM523 147h1v3h-1zM523 153h1v3h-1zM523 159h1v3h-1zM523 165h1v3h-1zM523 171h1v3h-1zM523 177h1v3h-1zM523 183h1v3h-1zM523 189h1v3h-1zM523 195h1v3h-1zM523 201h1v3h-1zM523 207h1v3h-1zM523 213h1v3h-1zM523 219h1v3h-1zM523 225h1v3h-1zM523 231h1v3h-1zM523 237h1v3h-1zM523 243h1v3h-1zM523 249h1v3h-1zM523 255h1v3h-1zM523 261h1v3h-1zM523 267h1v3h-1zM523 273h1v3h-1zM523 279h1v3h-1zM523 285h1v2h-1zM523 291h1v3h-1zM523 297h1v3h-1zM523 303h1v3h-1zM523 309h1v3h-1zM523 315h1v3h-1zM523 321h1v3h-1zM523 327h1v3h-1zM523 333h1v3h-1zM523 339h1v3h-1zM523 345h1v3h-1zM523 351h1v3h-1zM523 357h1v3h-1zM523 363h1v3h-1zM523 369h1v3h-1zM523 375h1v3h-1zM523 381h1v3h-1zM523 387h1v3h-1zM523 393h1v3h-1zM523 399h1v3h-1zM523 405h1v3h-1zM523 411h1v3h-1zM523 423h1v3h-1zM523 429h1v3h-1zM523 435h1v3h-1zM523 441h1v3h-1zM523 447h1v3h-1zM523 453h1v3h-1zM523 459h1v3h-1zM523 465h1v3h-1zM523 471h1v3h-1zM523 477h1v3h-1zM523 483h1v3h-1zM523 489h1v3h-1zM523 495h1v3h-1zM523 501h1v3h-1zM523 507h1v3h-1zM523 513h1v3h-1zM523 519h1v3h-1zM523 525h1v3h-1zM523 531h1v3h-1zM523 537h1v3h-1zM523 543h1v3h-1zM523 549h1v2h-1zM555 34h1v2h-1zM555 39h1v3h-1zM555 45h1v3h-1zM555 51h1v3h-1zM555 57h1v3h-1zM555 63h1v3h-1zM555 69h1v3h-1zM555 75h1v3h-1zM555 81h1v3h-1zM555 87h1v3h-1zM555 93h1v3h-1zM555 99h1v3h-1zM555 105h1v3h-1zM555 111h1v3h-1zM555 117h1v3h-1zM555 123h1v3h-1zM555 129h1v3h-1zM555 135h1v3h-1zM555 141h1v3h-1zM555 147h1v3h-1zM555 153h1v3h-1zM555 159h1v3h-1zM555 165h1v3h-1zM555 171h1v3h-1zM555 177h1v3h-1zM555 183h1v3h-1zM555 189h1v3h-1zM555 195h1v3h-1zM555 201h1v3h-1zM555 207h1v3h-1zM555 213h1v3h-1zM555 219h1v3h-1zM555 225h1v3h-1zM555 231h1v3h-1zM555 237h1v3h-1zM555 243h1v3h-1zM555 249h1v3h-1zM555 255h1v3h-1zM555 261h1v3h-1zM555 267h1v3h-1zM555 273h1v3h-1zM555 279h1v3h-1zM555 285h1v2h-1zM555 291h1v3h-1zM555 297h1v3h-1zM555 303h1v3h-1zM555 309h1v3h-1zM555 315h1v3h-1zM555 321h1v3h-1zM555 327h1v3h-1zM555 333h1v3h-1zM555 339h1v3h-1zM555 345h1v3h-1zM555 351h1v3h-1zM555 357h1v3h-1zM555 363h1v3h-1zM555 369h1v3h-1zM555 375h1v3h-1zM555 381h1v3h-1zM555 387h1v3h-1zM555 393h1v3h-1zM555 399h1v3h-1zM555 405h1v3h-1zM555 411h1v3h-1zM555 423h1v3h-1zM555 429h1v3h-1zM555 435h1v3h-1zM555 441h1v3h-1zM555 447h1v3h-1zM555 453h1v3h-1zM555 459h1v3h-1zM555 465h1v3h-1zM555 471h1v3h-1zM555 477h1v3h-1zM555 483h1v3h-1zM555 489h1v3h-1zM555 495h1v3h-1zM555 501h1v3h-1zM555 507h1v3h-1zM555 513h1v3h-1zM555 519h1v3h-1zM555 525h1v3h-1zM555 531h1v3h-1zM555 537h1v3h-1zM555 543h1v3h-1zM555 549h1v2h-1zM587 34h1v2h-1zM587 39h1v3h-1zM587 45h1v3h-1zM587 51h1v3h-1zM587 57h1v3h-1zM587 63h1v3h-1zM587 69h1v3h-1zM587 75h1v3h-1zM587 81h1v3h-1zM587 87h1v3h-1zM587 93h1v3h-1zM587 99h1v3h-1zM587 105h1v3h-1zM587 111h1v3h-1zM587 117h1v3h-1zM587 123h1v3h-1zM587 129h1v3h-1zM587 135h1v3h-1zM587 141h1v3h-1zM587 147h1v3h-1zM587 153h1v3h-1zM587 159h1v3h-1zM587 165h1v3h-1zM587 171h1v3h-1zM587 177h1v3h-1zM587 183h1v3h-1zM587 189h1v3h-1zM587 195h1v3h-1zM587 201h1v3h-1zM587 207h1v3h-1zM587 213h1v3h-1zM587 219h1v3h-1zM587 225h1v3h-1zM587 231h1v3h-1zM587 237h1v3h-1zM587 243h1v3h-1zM587 249h1v3h-1zM587 255h1v3h-1zM587 261h1v3h-1zM587 267h1v3h-1zM587 273h1v3h-1zM587 279h1v3h-1zM587 285h1v2h-1zM587 291h1v3h-1zM587 297h1v3h-1zM587 303h1v3h-1zM587 309h1v3h-1zM587 315h1v3h-1zM587 321h1v3h-1zM587 327h1v3h-1zM587 333h1v3h-1zM587 339h1v3h-1zM587 345h1v3h-1zM587 351h1v3h-1zM587 357h1v3h-1zM587 363h1v3h-1zM587 369h1v3h-1zM587 375h1v3h-1zM587 381h1v3h-1zM587 387h1v3h-1zM587 393h1v3h-1zM587 399h1v3h-1zM587 405h1v3h-1zM587 411h1v3h-1zM587 423h1v3h-1zM587 429h1v3h-1zM587 435h1v3h-1zM587 441h1v3h-1zM587 447h1v3h-1zM587 453h1v3h-1zM587 459h1v3h-1zM587 465h1v3h-1zM587 471h1v3h-1zM587 477h1v3h-1zM587 483h1v3h-1zM587 489h1v3h-1zM587 495h1v3h-1zM587 501h1v3h-1zM587 507h1v3h-1zM587 513h1v3h-1zM587 519h1v3h-1zM587 525h1v3h-1zM587 531h1v3h-1zM587 537h1v3h-1zM587 543h1v3h-1zM587 549h1v2h-1zM619 34h1v2h-1zM619 39h1v3h-1zM619 45h1v3h-1zM619 51h1v3h-1zM619 57h1v3h-1zM619 63h1v3h-1zM619 69h1v3h-1zM619 75h1v3h-1zM619 81h1v3h-1zM619 87h1v3h-1zM619 93h1v3h-1zM619 99h1v3h-1zM619 105h1v3h-1zM619 111h1v3h-1zM619 117h1v3h-1zM619 123h1v3h-1zM619 129h1v3h-1zM619 135h1v3h-1zM619 141h1v3h-1zM619 147h1v3h-1zM619 153h1v3h-1zM619 159h1v3h-1zM619 165h1v3h-1zM619 171h1v3h-1zM619 177h1v3h-1zM619 183h1v3h-1zM619 189h1v3h-1zM619 195h1v3h-1zM619 201h1v3h-1zM619 207h1v3h-1zM619 213h1v3h-1zM619 219h1v3h-1zM619 225h1v3h-1zM619 231h1v3h-1zM619 237h1v3h-1zM619 243h1v3h-1zM619 249h1v3h-1zM619 255h1v3h-1zM619 261h1v3h-1zM619 267h1v3h-1zM619 273h1v3h-1zM619 279h1v3h-1zM619 285h1v2h-1zM619 291h1v3h-1zM619 297h1v3h-1zM619 303h1v3h-1zM619 309h1v3h-1zM619 315h1v3h-1zM619 321h1v3h-1zM619 327h1v3h-1zM619 333h1v3h-1zM619 339h1v3h-1zM619 345h1v3h-1zM619 351h1v3h-1zM619 357h1v3h-1zM619 363h1v3h-1zM619 369h1v3h-1zM619 375h1v3h-1zM619 381h1v3h-1zM619 387h1v3h-1zM619 393h1v3h-1zM619 399h1v3h-1zM619 405h1v3h-1zM619 411h1v3h-1zM619 423h1v3h-1zM619 429h1v3h-1zM619 435h1v3h-1zM619 441h1v3h-1zM619 447h1v3h-1zM619 453h1v3h-1zM619 459h1v3h-1zM619 465h1v3h-1zM619 471h1v3h-1zM619 477h1v3h-1zM619 483h1v3h-1zM619 489h1v3h-1zM619 495h1v3h-1zM619 501h1v3h-1zM619 507h1v3h-1zM619 513h1v3h-1zM619 519h1v3h-1zM619 525h1v3h-1zM619 531h1v3h-1zM619 537h1v3h-1zM619 543h1v3h-1zM619 549h1v2h-1zM651 34h1v2h-1zM651 39h1v3h-1zM651 45h1v3h-1zM651 51h1v3h-1zM651 57h1v3h-1zM651 63h1v3h-1zM651 69h1v3h-1zM651 75h1v3h-1zM651 81h1v3h-1zM651 87h1v3h-1zM651 93h1v3h-1zM651 99h1v3h-1zM651 105h1v3h-1zM651 111h1v3h-1zM651 117h1v3h-1zM651 123h1v3h-1zM651 129h1v3h-1zM651 135h1v3h-1zM651 141h1v3h-1zM651 147h1v3h-1zM651 153h1v3h-1zM651 159h1v3h-1zM651 165h1v3h-1zM651 171h1v3h-1zM651 177h1v3h-1zM651 183h1v3h-1zM651 189h1v3h-1zM651 195h1v3h-1zM651 201h1v3h-1zM651 207h1v3h-1zM651 213h1v3h-1zM651 219h1v3h-1zM651 225h1v3h-1zM651 231h1v3h-1zM651 237h1v3h-1zM651 243h1v3h-1zM651 249h1v3h-1zM651 255h1v3h-1zM651 261h1v3h-1zM651 267h1v3h-1zM651 273h1v3h-1zM651 279h1v3h-1zM651 285h1v2h-1zM651 291h1v3h-1zM651 297h1v3h-1zM651 303h1v3h-1zM651 309h1v3h-1zM651 315h1v3h-1zM651 321h1v3h-1zM651 327h1v3h-1zM651 333h1v3h-1zM651 339h1v3h-1zM651 345h1v3h-1zM651 351h1v3h-1zM651 357h1v3h-1zM651 363h1v3h-1zM651 369h1v3h-1zM651 375h1v3h-1zM651 381h1v3h-1zM651 387h1v3h-1zM651 393h1v3h-1zM651 399h1v3h-1zM651 405h1v3h-1zM651 411h1v3h-1zM651 423h1v3h-1zM651 429h1v3h-1zM651 435h1v3h-1zM651 441h1v3h-1zM651 447h1v3h-1zM651 453h1v3h-1zM651 459h1v3h-1zM651 465h1v3h-1zM651 471h1v3h-1zM651 477h1v3h-1zM651 483h1v3h-1zM651 489h1v3h-1zM651 495h1v3h-1zM651 501h1v3h-1zM651 507h1v3h-1zM651 513h1v3h-1zM651 519h1v3h-1zM651 525h1v3h-1zM651 531h1v3h-1zM651 537h1v3h-1zM651 543h1v3h-1zM651 549h1v2h-1zM12 53h3v1h-3zM18 53h3v1h-3zM24 53h3v1h-3zM30 53h3v1h-3zM36 53h3v1h-3zM42 53h3v1h-3zM48 53h3v1h-3zM54 53h3v1h-3zM60 53h3v1h-3zM66 53h3v1h-3zM72 53h3v1h-3zM78 53h3v1h-3zM84 53h3v1h-3zM90 53h3v1h-3zM96 53h3v1h-3zM102 53h3v1h-3zM108 53h3v1h-3zM114 53h3v1h-3zM120 53h3v1h-3zM126 53h3v1h-3zM132 53h3v1h-3zM138 53h3v1h-3zM144 53h3v1h-3zM150 53h3v1h-3zM156 53h3v1h-3zM162 53h3v1h-3zM168 53h3v1h-3zM174 53h3v1h-3zM180 53h3v1h-3zM186 53h3v1h-3zM192 53h3v1h-3zM198 53h3v1h-3zM204 53h3v1h-3zM210 53h3v1h-3zM216 53h3v1h-3zM222 53h3v1h-3zM228 53h3v1h-3zM234 53h3v1h-3zM240 53h3v1h-3zM246 53h3v1h-3zM252 53h3v1h-3zM258 53h3v1h-3zM264 53h3v1h-3zM270 53h3v1h-3zM276 53h3v1h-3zM282 53h3v1h-3zM288 53h3v1h-3zM294 53h3v1h-3zM300 53h3v1h-3zM306 53h3v1h-3zM312 53h3v1h-3zM318 53h3v1h-3zM324 53h3v1h-3zM330 53h3v1h-3zM336 53h3v1h-3zM342 53h3v1h-3zM348 53h3v1h-3zM354 53h3v1h-3zM360 53h3v1h-3zM366 53h3v1h-3zM372 53h3v1h-3zM378 53h3v1h-3zM384 53h3v1h-3zM390 53h3v1h-3zM396 53h3v1h-3zM402 53h3v1h-3zM408 53h3v1h-3zM414 53h3v1h-3zM420 53h3v1h-3zM426 53h3v1h-3zM432 53h3v1h-3zM438 53h3v1h-3zM444 53h3v1h-3zM450 53h3v1h-3zM456 53h3v1h-3zM462 53h3v1h-3zM468 53h3v1h-3zM474 53h3v1h-3zM480 53h3v1h-3zM486 53h3v1h-3zM492 53h3v1h-3zM498 53h3v1h-3zM504 53h3v1h-3zM510 53h3v1h-3zM516 53h3v1h-3zM522 53h3v1h-3zM528 53h3v1h-3zM534 53h3v1h-3zM540 53h3v1h-3zM546 53h3v1h-3zM552 53h3v1h-3zM558 53h3v1h-3zM564 53h3v1h-3zM570 53h3v1h-3zM576 53h3v1h-3zM582 53h3v1h-3zM588 53h3v1h-3zM594 53h3v1h-3zM600 53h3v1h-3zM606 53h3v1h-3zM612 53h3v1h-3zM618 53h3v1h-3zM624 53h3v1h-3zM630 53h3v1h-3zM636 53h3v1h-3zM642 53h3v1h-3zM648 53h3v1h-3zM654 53h3v1h-3zM660 53h3v1h-3zM666 53h3v1h-3zM672 53h3v1h-3zM12 86h3v1h-3zM18 86h3v1h-3zM24 86h3v1h-3zM30 86h3v1h-3zM36 86h3v1h-3zM42 86h3v1h-3zM48 86h3v1h-3zM54 86h3v1h-3zM60 86h3v1h-3zM66 86h3v1h-3zM72 86h3v1h-3zM78 86h3v1h-3zM84 86h3v1h-3zM90 86h3v1h-3zM96 86h3v1h-3zM102 86h3v1h-3zM108 86h3v1h-3zM114 86h3v1h-3zM120 86h3v1h-3zM126 86h3v1h-3zM132 86h3v1h-3zM138 86h3v1h-3zM144 86h3v1h-3zM150 86h3v1h-3zM156 86h3v1h-3zM162 86h3v1h-3zM168 86h3v1h-3zM174 86h3v1h-3zM180 86h3v1h-3zM186 86h3v1h-3zM192 86h3v1h-3zM198 86h3v1h-3zM204 86h3v1h-3zM210 86h3v1h-3zM216 86h3v1h-3zM222 86h3v1h-3zM228 86h3v1h-3zM234 86h3v1h-3zM240 86h3v1h-3zM246 86h3v1h-3zM252 86h3v1h-3zM258 86h3v1h-3zM264 86h3v1h-3zM270 86h3v1h-3zM276 86h3v1h-3zM282 86h3v1h-3zM288 86h3v1h-3zM294 86h3v1h-3zM300 86h3v1h-3zM306 86h3v1h-3zM312 86h3v1h-3zM318 86h3v1h-3zM324 86h3v1h-3zM330 86h3v1h-3zM336 86h3v1h-3zM342 86h3v1h-3zM348 86h3v1h-3zM354 86h3v1h-3zM360 86h3v1h-3zM366 86h3v1h-3zM372 86h3v1h-3zM378 86h3v1h-3zM384 86h3v1h-3zM390 86h3v1h-3zM396 86h3v1h-3zM402 86h3v1h-3zM408 86h3v1h-3zM414 86h3v1h-3zM420 86h3v1h-3zM426 86h3v1h-3zM432 86h3v1h-3zM438 86h3v1h-3zM444 86h3v1h-3zM450 86h3v1h-3zM456 86h3v1h-3zM462 86h3v1h-3zM468 86h3v1h-3zM474 86h3v1h-3zM480 86h3v1h-3zM486 86h3v1h-3zM492 86h3v1h-3zM498 86h3v1h-3zM504 86h3v1h-3zM510 86h3v1h-3zM516 86h3v1h-3zM522 86h3v1h-3zM528 86h3v1h-3zM534 86h3v1h-3zM540 86h3v1h-3zM546 86h3v1h-3zM552 86h3v1h-3zM558 86h3v1h-3zM564 86h3v1h-3zM570 86h3v1h-3zM576 86h3v1h-3zM582 86h3v1h-3zM588 86h3v1h-3zM594 86h3v1h-3zM600 86h3v1h-3zM606 86h3v1h-3zM612 86h3v1h-3zM618 86h3v1h-3zM624 86h3v1h-3zM630 86h3v1h-3zM636 86h3v1h-3zM642 86h3v1h-3zM648 86h3v1h-3zM654 86h3v1h-3zM660 86h3v1h-3zM666 86h3v1h-3zM672 86h3v1h-3zM12 119h3v1h-3zM18 119h3v1h-3zM24 119h3v1h-3zM30 119h3v1h-3zM36 119h3v1h-3zM42 119h3v1h-3zM48 119h3v1h-3zM54 119h3v1h-3zM60 119h3v1h-3zM66 119h3v1h-3zM72 119h3v1h-3zM78 119h3v1h-3zM84 119h3v1h-3zM90 119h3v1h-3zM96 119h3v1h-3zM102 119h3v1h-3zM108 119h3v1h-3zM114 119h3v1h-3zM120 119h3v1h-3zM126 119h3v1h-3zM132 119h3v1h-3zM138 119h3v1h-3zM144 119h3v1h-3zM150 119h3v1h-3zM156 119h3v1h-3zM162 119h3v1h-3zM168 119h3v1h-3zM174 119h3v1h-3zM180 119h3v1h-3zM186 119h3v1h-3zM192 119h3v1h-3zM198 119h3v1h-3zM204 119h3v1h-3zM210 119h3v1h-3zM216 119h3v1h-3zM222 119h3v1h-3zM228 119h3v1h-3zM234 119h3v1h-3zM240 119h3v1h-3zM246 119h3v1h-3zM252 119h3v1h-3zM258 119h3v1h-3zM264 119h3v1h-3zM270 119h3v1h-3zM276 119h3v1h-3zM282 119h3v1h-3zM288 119h3v1h-3zM294 119h3v1h-3zM300 119h3v1h-3zM306 119h3v1h-3zM312 119h3v1h-3zM318 119h3v1h-3zM324 119h3v1h-3zM330 119h3v1h-3zM336 119h3v1h-3zM342 119h3v1h-3zM348 119h3v1h-3zM354 119h3v1h-3zM360 119h3v1h-3zM366 119h3v1h-3zM372 119h3v1h-3zM378 119h3v1h-3zM384 119h3v1h-3zM390 119h3v1h-3zM396 119h3v1h-3zM402 119h3v1h-3zM408 119h3v1h-3zM414 119h3v1h-3zM420 119h3v1h-3zM426 119h3v1h-3zM432 119h3v1h-3zM438 119h3v1h-3zM444 119h3v1h-3zM450 119h3v1h-3zM456 119h3v1h-3zM462 119h3v1h-3zM468 119h3v1h-3zM474 119h3v1h-3zM480 119h3v1h-3zM486 119h3v1h-3zM492 119h3v1h-3zM498 119h3v1h-3zM504 119h3v1h-3zM510 119h3v1h-3zM516 119h3v1h-3zM522 119h3v1h-3zM528 119h3v1h-3zM534 119h3v1h-3zM540 119h3v1h-3zM546 119h3v1h-3zM552 119h3v1h-3zM558 119h3v1h-3zM564 119h3v1h-3zM570 119h3v1h-3zM576 119h3v1h-3zM582 119h3v1h-3zM588 119h3v1h-3zM594 119h3v1h-3zM600 119h3v1h-3zM606 119h3v1h-3zM612 119h3v1h-3zM618 119h3v1h-3zM624 119h3v1h-3zM630 119h3v1h-3zM636 119h3v1h-3zM642 119h3v1h-3zM648 119h3v1h-3zM654 119h3v1h-3zM660 119h3v1h-3zM666 119h3v1h-3zM672 119h3v1h-3zM12 152h3v1h-3zM18 152h3v1h-3zM24 152h3v1h-3zM30 152h3v1h-3zM36 152h3v1h-3zM42 152h3v1h-3zM48 152h3v1h-3zM54 152h3v1h-3zM60 152h3v1h-3zM66 152h3v1h-3zM72 152h3v1h-3zM78 152h3v1h-3zM84 152h3v1h-3zM90 152h3v1h-3zM96 152h3v1h-3zM102 152h3v1h-3zM108 152h3v1h-3zM114 152h3v1h-3zM120 152h3v1h-3zM126 152h3v1h-3zM132 152h3v1h-3zM138 152h3v1h-3zM144 152h3v1h-3zM150 152h3v1h-3zM156 152h3v1h-3zM162 152h3v1h-3zM168 152h3v1h-3zM174 152h3v1h-3zM180 152h3v1h-3zM186 152h3v1h-3zM192 152h3v1h-3zM198 152h3v1h-3zM204 152h3v1h-3zM210 152h3v1h-3zM216 152h3v1h-3zM222 152h3v1h-3zM228 152h3v1h-3zM234 152h3v1h-3zM240 152h3v1h-3zM246 152h3v1h-3zM252 152h3v1h-3zM258 152h3v1h-3zM264 152h3v1h-3zM270 152h3v1h-3zM276 152h3v1h-3zM282 152h3v1h-3zM288 152h3v1h-3zM294 152h3v1h-3zM300 152h3v1h-3zM306 152h3v1h-3zM312 152h3v1h-3zM318 152h3v1h-3zM324 152h3v1h-3zM330 152h3v1h-3zM336 152h3v1h-3zM342 152h3v1h-3zM348 152h3v1h-3zM354 152h3v1h-3zM360 152h3v1h-3zM366 152h3v1h-3zM372 152h3v1h-3zM378 152h3v1h-3zM384 152h3v1h-3zM390 152h3v1h-3zM396 152h3v1h-3zM402 152h3v1h-3zM408 152h3v1h-3zM414 152h3v1h-3zM420 152h3v1h-3zM426 152h3v1h-3zM432 152h3v1h-3zM438 152h3v1h-3zM444 152h3v1h-3zM450 152h3v1h-3zM456 152h3v1h-3zM462 152h3v1h-3zM468 152h3v1h-3zM474 152h3v1h-3zM480 152h3v1h-3zM486 152h3v1h-3zM492 152h3v1h-3zM498 152h3v1h-3zM504 152h3v1h-3zM510 152h3v1h-3zM516 152h3v1h-3zM522 152h3v1h-3zM528 152h3v1h-3zM534 152h3v1h-3zM540 152h3v1h-3zM546 152h3v1h-3zM552 152h3v1h-3zM558 152h3v1h-3zM564 152h3v1h-3zM570 152h3v1h-3zM576 152h3v1h-3zM582 152h3v1h-3zM588 152h3v1h-3zM594 152h3v1h-3zM600 152h3v1h-3zM606 152h3v1h-3zM612 152h3v1h-3zM618 152h3v1h-3zM624 152h3v1h-3zM630 152h3v1h-3zM636 152h3v1h-3zM642 152h3v1h-3zM648 152h3v1h-3zM654 152h3v1h-3zM660 152h3v1h-3zM666 152h3v1h-3zM672 152h3v1h-3zM12 185h3v1h-3zM18 185h3v1h-3zM24 185h3v1h-3zM30 185h3v1h-3zM36 185h3v1h-3zM42 185h3v1h-3zM48 185h3v1h-3zM54 185h3v1h-3zM60 185h3v1h-3zM66 185h3v1h-3zM72 185h3v1h-3zM78 185h3v1h-3zM84 185h3v1h-3zM90 185h3v1h-3zM96 185h3v1h-3zM102 185h3v1h-3zM108 185h3v1h-3zM114 185h3v1h-3zM120 185h3v1h-3zM126 185h3v1h-3zM132 185h3v1h-3zM138 185h3v1h-3zM144 185h3v1h-3zM150 185h3v1h-3zM156 185h3v1h-3zM162 185h3v1h-3zM168 185h3v1h-3zM174 185h3v1h-3zM180 185h3v1h-3zM186 185h3v1h-3zM192 185h3v1h-3zM198 185h3v1h-3zM204 185h3v1h-3zM210 185h3v1h-3zM216 185h3v1h-3zM222 185h3v1h-3zM228 185h3v1h-3zM234 185h3v1h-3zM240 185h3v1h-3zM246 185h3v1h-3zM252 185h3v1h-3zM258 185h3v1h-3zM264 185h3v1h-3zM270 185h3v1h-3zM276 185h3v1h-3zM282 185h3v1h-3zM288 185h3v1h-3zM294 185h3v1h-3zM300 185h3v1h-3zM306 185h3v1h-3zM312 185h3v1h-3zM318 185h3v1h-3zM324 185h3v1h-3zM330 185h3v1h-3zM336 185h3v1h-3zM342 185h3v1h-3zM348 185h3v1h-3zM354 185h3v1h-3zM360 185h3v1h-3zM366 185h3v1h-3zM372 185h3v1h-3zM378 185h3v1h-3zM384 185h3v1h-3zM390 185h3v1h-3zM396 185h3v1h-3zM402 185h3v1h-3zM408 185h3v1h-3zM414 185h3v1h-3zM420 185h3v1h-3zM426 185h3v1h-3zM432 185h3v1h-3zM438 185h3v1h-3zM444 185h3v1h-3zM450 185h3v1h-3zM456 185h3v1h-3zM462 185h3v1h-3zM468 185h3v1h-3zM474 185h3v1h-3zM480 185h3v1h-3zM486 185h3v1h-3zM492 185h3v1h-3zM498 185h3v1h-3zM504 185h3v1h-3zM510 185h3v1h-3zM516 185h3v1h-3zM522 185h3v1h-3zM528 185h3v1h-3zM534 185h3v1h-3zM540 185h3v1h-3zM546 185h3v1h-3zM552 185h3v1h-3zM558 185h3v1h-3zM564 185h3v1h-3zM570 185h3v1h-3zM576 185h3v1h-3zM582 185h3v1h-3zM588 185h3v1h-3zM594 185h3v1h-3zM600 185h3v1h-3zM606 185h3v1h-3zM612 185h3v1h-3zM618 185h3v1h-3zM624 185h3v1h-3zM630 185h3v1h-3zM636 185h3v1h-3zM642 185h3v1h-3zM648 185h3v1h-3zM654 185h3v1h-3zM660 185h3v1h-3zM666 185h3v1h-3zM672 185h3v1h-3zM12 218h3v1h-3zM18 218h3v1h-3zM24 218h3v1h-3zM30 218h3v1h-3zM36 218h3v1h-3zM42 218h3v1h-3zM48 218h3v1h-3zM54 218h3v1h-3zM60 218h3v1h-3zM66 218h3v1h-3zM72 218h3v1h-3zM78 218h3v1h-3zM84 218h3v1h-3zM90 218h3v1h-3zM96 218h3v1h-3zM102 218h3v1h-3zM108 218h3v1h-3zM114 218h3v1h-3zM120 218h3v1h-3zM126 218h3v1h-3zM132 218h3v1h-3zM138 218h3v1h-3zM144 218h3v1h-3zM150 218h3v1h-3zM156 218h3v1h-3zM162 218h3v1h-3zM168 218h3v1h-3zM174 218h3v1h-3zM180 218h3v1h-3zM186 218h3v1h-3zM192 218h3v1h-3zM198 218h3v1h-3zM204 218h3v1h-3zM210 218h3v1h-3zM216 218h3v1h-3zM222 218h3v1h-3zM228 218h3v1h-3zM234 218h3v1h-3zM240 218h3v1h-3zM246 218h3v1h-3zM252 218h3v1h-3zM258 218h3v1h-3zM264 218h3v1h-3zM270 218h3v1h-3zM276 218h3v1h-3zM282 218h3v1h-3zM288 218h3v1h-3zM294 218h3v1h-3zM300 218h3v1h-3zM306 218h3v1h-3zM312 218h3v1h-3zM318 218h3v1h-3zM324 218h3v1h-3zM330 218h3v1h-3zM336 218h3v1h-3zM342 218h3v1h-3zM348 218h3v1h-3zM354 218h3v1h-3zM360 218h3v1h-3zM366 218h3v1h-3zM372 218h3v1h-3zM378 218h3v1h-3zM384 218h3v1h-3zM390 218h3v1h-3zM396 218h3v1h-3zM402 218h3v1h-3zM408 218h3v1h-3zM414 218h3v1h-3zM420 218h3v1h-3zM426 218h3v1h-3zM432 218h3v1h-3zM438 218h3v1h-3zM444 218h3v1h-3zM450 218h3v1h-3zM456 218h3v1h-3zM462 218h3v1h-3zM468 218h3v1h-3zM474 218h3v1h-3zM480 218h3v1h-3zM486 218h3v1h-3zM492 218h3v1h-3zM498 218h3v1h-3zM504 218h3v1h-3zM510 218h3v1h-3zM516 218h3v1h-3zM522 218h3v1h-3zM528 218h3v1h-3zM534 218h3v1h-3zM540 218h3v1h-3zM546 218h3v1h-3zM552 218h3v1h-3zM558 218h3v1h-3zM564 218h3v1h-3zM570 218h3v1h-3zM576 218h3v1h-3zM582 218h3v1h-3zM588 218h3v1h-3zM594 218h3v1h-3zM600 218h3v1h-3zM606 218h3v1h-3zM612 218h3v1h-3zM618 218h3v1h-3zM624 218h3v1h-3zM630 218h3v1h-3zM636 218h3v1h-3zM642 218h3v1h-3zM648 218h3v1h-3zM654 218h3v1h-3zM660 218h3v1h-3zM666 218h3v1h-3zM672 218h3v1h-3zM12 251h3v1h-3zM18 251h3v1h-3zM24 251h3v1h-3zM30 251h3v1h-3zM36 251h3v1h-3zM42 251h3v1h-3zM48 251h3v1h-3zM54 251h3v1h-3zM60 251h3v1h-3zM66 251h3v1h-3zM72 251h3v1h-3zM78 251h3v1h-3zM84 251h3v1h-3zM90 251h3v1h-3zM96 251h3v1h-3zM102 251h3v1h-3zM108 251h3v1h-3zM114 251h3v1h-3zM120 251h3v1h-3zM126 251h3v1h-3zM132 251h3v1h-3zM138 251h3v1h-3zM144 251h3v1h-3zM150 251h3v1h-3zM156 251h3v1h-3zM162 251h3v1h-3zM168 251h3v1h-3zM174 251h3v1h-3zM180 251h3v1h-3zM186 251h3v1h-3zM192 251h3v1h-3zM198 251h3v1h-3zM204 251h3v1h-3zM210 251h3v1h-3zM216 251h3v1h-3zM222 251h3v1h-3zM228 251h3v1h-3zM234 251h3v1h-3zM240 251h3v1h-3zM246 251h3v1h-3zM252 251h3v1h-3zM258 251h3v1h-3zM264 251h3v1h-3zM270 251h3v1h-3zM276 251h3v1h-3zM282 251h3v1h-3zM288 251h3v1h-3zM294 251h3v1h-3zM300 251h3v1h-3zM306 251h3v1h-3zM312 251h3v1h-3zM318 251h3v1h-3zM324 251h3v1h-3zM330 251h3v1h-3zM336 251h3v1h-3zM342 251h3v1h-3zM348 251h3v1h-3zM354 251h3v1h-3zM360 251h3v1h-3zM366 251h3v1h-3zM372 251h3v1h-3zM378 251h3v1h-3zM384 251h3v1h-3zM390 251h3v1h-3zM396 251h3v1h-3zM402 251h3v1h-3zM408 251h3v1h-3zM414 251h3v1h-3zM420 251h3v1h-3zM426 251h3v1h-3zM432 251h3v1h-3zM438 251h3v1h-3zM444 251h3v1h-3zM450 251h3v1h-3zM456 251h3v1h-3zM462 251h3v1h-3zM468 251h3v1h-3zM474 251h3v1h-3zM480 251h3v1h-3zM486 251h3v1h-3zM492 251h3v1h-3zM498 251h3v1h-3zM504 251h3v1h-3zM510 251h3v1h-3zM516 251h3v1h-3zM522 251h3v1h-3zM528 251h3v1h-3zM534 251h3v1h-3zM540 251h3v1h-3zM546 251h3v1h-3zM552 251h3v1h-3zM558 251h3v1h-3zM564 251h3v1h-3zM570 251h3v1h-3zM576 251h3v1h-3zM582 251h3v1h-3zM588 251h3v1h-3zM594 251h3v1h-3zM600 251h3v1h-3zM606 251h3v1h-3zM612 251h3v1h-3zM618 251h3v1h-3zM624 251h3v1h-3zM630 251h3v1h-3zM636 251h3v1h-3zM642 251h3v1h-3zM648 251h3v1h-3zM654 251h3v1h-3zM660 251h3v1h-3zM666 251h3v1h-3zM672 251h3v1h-3zM12 284h3v1h-3zM18 284h3v1h-3zM24 284h3v1h-3zM30 284h3v1h-3zM36 284h3v1h-3zM42 284h3v1h-3zM48 284h3v1h-3zM54 284h3v1h-3zM60 284h3v1h-3zM66 284h3v1h-3zM72 284h3v1h-3zM78 284h3v1h-3zM84 284h3v1h-3zM90 284h3v1h-3zM96 284h3v1h-3zM102 284h3v1h-3zM108 284h3v1h-3zM114 284h3v1h-3zM120 284h3v1h-3zM126 284h3v1h-3zM132 284h3v1h-3zM138 284h3v1h-3zM144 284h3v1h-3zM150 284h3v1h-3zM156 284h3v1h-3zM162 284h3v1h-3zM168 284h3v1h-3zM174 284h3v1h-3zM180 284h3v1h-3zM186 284h3v1h-3zM192 284h3v1h-3zM198 284h3v1h-3zM204 284h3v1h-3zM210 284h3v1h-3zM216 284h3v1h-3zM222 284h3v1h-3zM228 284h3v1h-3zM234 284h3v1h-3zM240 284h3v1h-3zM246 284h3v1h-3zM252 284h3v1h-3zM258 284h3v1h-3zM264 284h3v1h-3zM270 284h3v1h-3zM276 284h3v1h-3zM282 284h3v1h-3zM288 284h3v1h-3zM294 284h3v1h-3zM300 284h3v1h-3zM306 284h3v1h-3zM312 284h3v1h-3zM318 284h3v1h-3zM324 284h3v1h-3zM330 284h3v1h-3zM336 284h3v1h-3zM342 284h3v1h-3zM348 284h3v1h-3zM354 284h3v1h-3zM360 284h3v1h-3zM366 284h3v1h-3zM372 284h3v1h-3zM378 284h3v1h-3zM384 284h3v1h-3zM390 284h3v1h-3zM396 284h3v1h-3zM402 284h3v1h-3zM408 284h3v1h-3zM414 284h3v1h-3zM420 284h3v1h-3zM426 284h3v1h-3zM432 284h3v1h-3zM438 284h3v1h-3zM444 284h3v1h-3zM450 284h3v1h-3zM456 284h3v1h-3zM462 284h3v1h-3zM468 284h3v1h-3zM474 284h3v1h-3zM480 284h3v1h-3zM486 284h3v1h-3zM492 284h3v1h-3zM498 284h3v1h-3zM504 284h3v1h-3zM510 284h3v1h-3zM516 284h3v1h-3zM522 284h3v1h-3zM528 284h3v1h-3zM534 284h3v1h-3zM540 284h3v1h-3zM546 284h3v1h-3zM552 284h3v1h-3zM558 284h3v1h-3zM564 284h3v1h-3zM570 284h3v1h-3zM576 284h3v1h-3zM582 284h3v1h-3zM588 284h3v1h-3zM594 284h3v1h-3zM600 284h3v1h-3zM606 284h3v1h-3zM612 284h3v1h-3zM618 284h3v1h-3zM624 284h3v1h-3zM630 284h3v1h-3zM636 284h3v1h-3zM642 284h3v1h-3zM648 284h3v1h-3zM654 284h3v1h-3zM660 284h3v1h-3zM666 284h3v1h-3zM672 284h3v1h-3z" fill="#778899"/>
<path d="M195 34h1v2h-1zM195 39h1v3h-1zM195 45h1v3h-1zM195 51h1v3h-1zM195 57h1v3h-1zM195 63h1v3h-1zM195 69h1v3h-1zM195 75h1v3h-1zM195 81h1v3h-1zM195 87h1v3h-1zM195 93h1v3h-1zM195 99h1v3h-1zM195 105h1v3h-1zM195 111h1v3h-1zM195 117h1v3h-1zM195 123h1v3h-1zM195 129h1v3h-1zM195 135h1v3h-1zM195 141h1v3h-1zM195 147h1v3h-1zM195 153h1v3h-1zM195 159h1v3h-1zM195 165h1v3h-1zM195 171h1v3h-1zM195 177h1v3h-1zM195 183h1v3h-1zM195 189h1v3h-1zM195 195h1v3h-1zM195 201h1v3h-1zM195 207h1v3h-1zM195 213h1v3h-1zM195 219h1v3h-1zM195 225h1v3h-1zM195 231h1v3h-1zM195 237h1v3h-1zM195 243h1v3h-1zM195 249h1v3h-1zM195 255h1v3h-1zM195 261h1v3h-1zM195 267h1v3h-1zM195 273h1v3h-1zM195 279h1v3h-1zM195 285h1v2h-1zM195 291h1v3h-1zM195 297h1v3h-1zM195 303h1v3h-1zM195 309h1v3h-1zM195 315h1v3h-1zM195 321h1v3h-1zM195 327h1v3h-1zM195 333h1v3h-1zM195 339h1v3h-1zM195 345h1v3h-1zM195 351h1v3h-1zM195 357h1v3h-1zM195 363h1v3h-1zM195 369h1v3h-1zM195 375h1v3h-1zM195 381h1v3h-1zM195 387h1v3h-1zM195 393h1v3h-1zM195 399h1v3h-1zM195 405h1v3h-1zM195 411h1v3h-1zM195 423h1v3h-1zM195 429h1v3h-1zM195 435h1v3h-1zM195 441h1v3h-1zM195 447h1v3h-1zM195 453h1v3h-1zM195 459h1v3h-1zM195 465h1v3h-1zM195 471h1v3h-1zM195 477h1v3h-1zM195 483h1v3h-1zM195 489h1v3h-1zM195 495h1v3h-1zM195 501h1v3h-1zM195 507h1v3h-1zM195 513h1v3h-1zM195 519h1v3h-1zM195 525h1v3h-1zM195 531h1v3h-1zM195 537h1v3h-1zM195 543h1v3h-1zM195 549h1v2h-1zM387 34h1v2h-1zM387 39h1v3h-1zM387 45h1v3h-1zM387 51h1v3h-1zM387 57h1v3h-1zM387 63h1v3h-1zM387 69h1v3h-1zM387 75h1v3h-1zM387 81h1v3h-1zM387 87h1v3h-1zM387 93h1v3h-1zM387 99h1v3h-1zM387 105h1v3h-1zM387 111h1v3h-1zM387 117h1v3h-1zM387 123h1v3h-1zM387 129h1v3h-1zM387 135h1v3h-1zM387 141h1v3h-1zM387 147h1v3h-1zM387 153h1v3h-1zM387 159h1v3h-1zM387 165h1v3h-1zM387 171h1v3h-1zM387 177h1v3h-1zM387 183h1v3h-1zM387 189h1v3h-1zM387 195h1v3h-1zM387 201h1v3h-1zM387 207h1v3h-1zM387 213h1v3h-1zM387 219h1v3h-1zM387 225h1v3h-1zM387 231h1v3h-1zM387 237h1v3h-1zM387 243h1v3h-1zM387 249h1v3h-1zM387 255h1v3h-1zM387 261h1v3h-1zM387 267h1v3h-1zM387 273h1v3h-1zM387 279h1v3h-1zM387 285h1v2h-1zM387 291h1v3h-1zM387 297h1v3h-1zM387 303h1v3h-1zM387 309h1v3h-1zM387 315h1v3h-1zM387 321h1v3h-1zM387 327h1v3h-1zM387 333h1v3h-1zM387 339h1v3h-1zM387 345h1v3h-1zM387 351h1v3h-1zM387 357h1v3h-1zM387 363h1v3h-1zM387 369h1v3h-1zM387 375h1v3h-1zM387 381h1v3h-1zM387 387h1v3h-1zM387 393h1v3h-1zM387 399h1v3h-1zM387 405h1v3h-1zM387 411h1v3h-1zM387 423h1v3h-1zM387 429h1v3h-1zM387 435h1v3h-1zM387 441h1v3h-1zM387 447h1v3h-1zM387 453h1v3h-1zM387 459h1v3h-1zM387 465h1v3h-1zM387 471h1v3h-1zM387 477h1v3h-1zM387 483h1v3h-1zM387 489h1v3h-1zM387 495h1v3h-1zM387 501h1v3h-1zM387 507h1v3h-1zM387 513h1v3h-1zM387 519h1v3h-1zM387 525h1v3h-1zM387 531h1v3h-1zM387 537h1v3h-1zM387 543h1v3h-1zM387 549h1v2h-1zM579 34h1v2h-1zM579 39h1v3h-1zM579 45h1v3h-1zM579 51h1v3h-1zM579 57h1v3h-1zM579 63h1v3h-1zM579 69h1v3h-1zM579 75h1v3h-1zM579 81h1v3h-1zM579 87h1v3h-1zM579 93h1v3h-1zM579 99h1v3h-1zM579 105h1v3h-1zM579 111h1v3h-1zM579 117h1v3h-1zM579 123h1v3h-1zM579 129h1v3h-1zM579 135h1v3h-1zM579 141h1v3h-1zM579 147h1v3h-1zM579 153h1v3h-1zM579 159h1v3h-1zM579 165h1v3h-1zM579 171h1v3h-1zM579 177h1v3h-1zM579 183h1v3h-1zM579 189h1v3h-1zM579 195h1v3h-1zM579 201h1v3h-1zM579 207h1v3h-1zM579 213h1v3h-1zM579 219h1v3h-1zM579 225h1v3h-1zM579 231h1v3h-1zM579 237h1v3h-1zM579 243h1v3h-1zM579 249h1v3h-1zM579 255h1v3h-1zM579 261h1v3h-1zM579 267h1v3h-1zM579 273h1v3h-1zM579 279h1v3h-1zM579 285h1v2h-1zM579 291h1v3h-1zM579 297h1v3h-1zM579 303h1v3h-1zM579 309h1v3h-1zM579 315h1v3h-1zM579 321h1v3h-1zM579 327h1v3h-1zM579 333h1v3h-1zM579 339h1v3h-1zM579 345h1v3h-1zM579 351h1v3h-1zM579 357h1v3h-1zM579 363h1v3h-1zM579 369h1v3h-1zM579 375h1v3h-1zM579 381h1v3h-1zM579 387h1v3h-1zM579 393h1v3h-1zM579 399h1v3h-1zM579 405h1v3h-1zM579 411h1v3h-1zM579 423h1v3h-1zM579 429h1v3h-1zM579 435h1v3h-1zM579 441h1v3h-1zM579 447h1v3h-1zM579 453h1v3h-1zM579 459h1v3h-1zM579 465h1v3h-1zM579 471h1v3h-1zM579 477h1v3h-1zM579 483h1v3h-1zM579 489h1v3h-1zM579 495h1v3h-1zM579 501h1v3h-1zM579 507h1v3h-1zM579 513h1v3h-1zM579 519h1v3h-1zM579 525h1v3h-1zM579 531h1v3h-1zM579 537h1v3h-1zM579 543h1v3h-1zM579 549h1v2h-1z" fill="#ffffff"/>
<clipPath id="c0"><rect x="11" y="34" width="667" height="253"/></clipPath>
<g clip-path="url(#c0)"><path d="M11 262h1v4h-1zM19 264h1v9h-1zM27 266h1v7h-1zM35 262h1v7h-1zM43 261h1v9h-1zM51 252h1v12h-1zM59 251h1v6h-1zM67 254h1v9h-1zM75 232h1v29h-1zM83 230h1v16h-1zM91 232h1v13h-1zM99 232h1v11h-1zM107 222h1v18h-1zM115 227h1v14h-1zM123 231h1v14h-1zM131 226h1v15h-1zM139 234h1v18h-1zM147 243h1v18h-1zM155 248h1v12h-1zM163 247h1v8h-1zM171 240h1v15h-1zM179 229h1v17h-1zM187 226h1v8h-1zM195 228h1v3h-1zM203 226h1v7h-1zM211 226h1v7h-1zM219 224h1v6h-1zM227 223h1v5h-1zM235 223h1v7h-1zM243 225h1v5h-1zM251 225h1v6h-1zM259 226h1v9h-1zM267 217h1v16h-1zM275 209h1v14h-1zM283 209h1v15h-1zM291 191h1v23h-1zM299 186h1v14h-1zM307 179h1v14h-1zM315 178h1v17h-1zM323 185h1v17h-1zM331 195h1v16h-1zM339 202h1v9h-1zM347 193h1v14h-1zM355 191h1v10h-1zM363 193h1v8h-1zM371 192h1v10h-1zM379 197h1v6h-1zM387 199h1v5h-1zM395 199h1v8h-1zM403 204h1v5h-1zM411 203h1v8h-1zM419 201h1v7h-1zM427 197h1v9h-1zM435 199h1v10h-1zM443 202h1v6h-1zM451 203h1v10h-1zM459 206h1v10h-1zM467 201h1v14h-1zM475 206h1v14h-1zM483 216h1v9h-1zM491 218h1v8h-1zM499 205h1v29h-1zM507 147h1v77h-1zM515 107h1v44h-1zM523 97h1v34h-1zM531 73h1v33h-1zM539 78h1v24h-1zM547 79h1v17h-1zM555 74h1v18h-1zM563 86h1v8h-1zM571 83h1v10h-1zM579 81h1v9h-1zM587 81h1v8h-1zM595 77h1v14h-1zM603 70h1v10h-1zM611 62h1v15h-1zM619 57h1v10h-1zM627 55h1v12h-1zM635 58h1v9h-1zM643 64h1v8h-1zM651 57h1v18h-1zM659 59h1v25h-1zM667 60h1v16h-1zM675 52h1v16h-1zM9 263h5v3h-5zM17 265h5v5h-5zM25 268h5v3h-5zM33 262h5v7h-5zM41 262h5v1h-5zM49 253h5v9h-5zM57 253h5v4h-5zM65 256h5v6h-5zM73 233h5v28h-5zM81 233h5v9h-5zM89 237h5v6h-5zM97 237h5v1h-5zM105 227h5v10h-5zM113 227h5v11h-5zM121 233h5v5h-5zM129 233h5v3h-5zM137 234h5v16h-5zM145 249h5v8h-5zM153 252h5v5h-5zM161 248h5v6h-5zM169 245h5v4h-5zM177 231h5v15h-5zM185 228h5v4h-5zM193 228h5v3h-5zM201 227h5v5h-5zM209 228h5v3h-5zM217 224h5v6h-5zM225 223h5v2h-5zM233 223h5v7h-5zM241 226h5v4h-5zM249 226h5v2h-5zM257 227h5v4h-5zM265 220h5v11h-5zM273 213h5v8h-5zM281 210h5v4h-5zM289 196h5v14h-5zM297 190h5v7h-5zM305 182h5v9h-5zM313 182h5v13h-5zM321 194h5v6h-5zM329 200h5v7h-5zM337 204h5v3h-5zM345 194h5v11h-5zM353 194h5v3h-5zM361 196h5v1h-5zM369 195h5v5h-5zM377 199h5v4h-5zM385 201h5v2h-5zM393 201h5v4h-5zM401 204h5v4h-5zM409 204h5v4h-5zM417 203h5v4h-5zM425 200h5v6h-5zM433 200h5v8h-5zM441 203h5v4h-5zM449 203h5v9h-5zM457 206h5v6h-5zM465 206h5v3h-5zM473 208h5v11h-5zM481 217h5v6h-5zM489 221h5v2h-5zM497 211h5v10h-5zM505 147h5v65h-5zM513 125h5v22h-5zM521 102h5v24h-5zM529 95h5v8h-5zM537 79h5v17h-5zM545 79h5v2h-5zM553 80h5v9h-5zM561 88h5v4h-5zM569 84h5v9h-5zM577 83h5v2h-5zM585 83h5v4h-5zM593 77h5v11h-5zM601 72h5v6h-5zM609 63h5v10h-5zM617 63h5v1h-5zM625 60h5v4h-5zM633 60h5v6h-5zM641 65h5v4h-5zM649 59h5v10h-5zM657 59h5v7h-5zM665 63h5v3h-5zM673 62h5v2h-5z" fill="#00ff00"/><path d="M10 264h3v1h-3zM18 266h3v3h-3zM58 254h3v2h-3zM66 257h3v4h-3zM82 234h3v7h-3zM114 228h3v9h-3zM130 234h3v1h-3zM138 235h3v14h-3zM146 250h3v6h-3zM194 229h3v1h-3zM210 229h3v1h-3zM234 224h3v5h-3zM258 228h3v2h-3zM314 183h3v11h-3zM322 195h3v4h-3zM330 201h3v5h-3zM354 195h3v1h-3zM370 196h3v3h-3zM378 200h3v2h-3zM394 202h3v2h-3zM402 205h3v2h-3zM418 204h3v2h-3zM434 201h3v6h-3zM450 204h3v7h-3zM466 207h3v1h-3zM474 209h3v9h-3zM482 218h3v4h-3zM554 81h3v7h-3zM562 89h3v2h-3zM586 84h3v2h-3zM634 61h3v4h-3zM642 66h3v2h-3zM658 60h3v5h-3z" fill="#ffffff"/><path d="M26 269h3v1h-3zM34 263h3v5h-3zM50 254h3v7h-3zM74 234h3v26h-3zM90 238h3v4h-3zM106 228h3v8h-3zM122 234h3v3h-3zM154 253h3v3h-3zM162 249h3v4h-3zM170 246h3v2h-3zM178 232h3v13h-3zM186 229h3v2h-3zM202 228h3v3h-3zM218 225h3v4h-3zM242 227h3v2h-3zM266 221h3v9h-3zM274 214h3v6h-3zM282 211h3v2h-3zM290 197h3v12h-3zM298 191h3v5h-3zM306 183h3v7h-3zM338 205h3v1h-3zM346 195h3v9h-3zM410 205h3v2h-3zM426 201h3v4h-3zM442 204h3v2h-3zM458 207h3v4h-3zM498 212h3v8h-3zM506 148h3v63h-3zM514 126h3v20h-3zM522 103h3v22h-3zM530 96h3v6h-3zM538 80h3v15h-3zM570 85h3v7h-3zM594 78h3v9h-3zM602 73h3v4h-3zM610 64h3v8h-3zM626 61h3v2h-3zM650 60h3v8h-3zM666 64h3v1h-3z" fill="#000000"/></g>
<g shape-rendering="geometricPrecision"><polygon points="58.75,262 68.25,271.5 68.25,275.5 58.75,266 49.25,275.5 49.25,271.5" fill="#87cefa"/><rect x="57.15" y="265" width="3.3" height="19" fill="#87cefa"/><polygon points="50.30,263.00 52.10,267.08 56.54,266.60 53.90,270.20 56.54,273.80 52.10,273.32 50.30,277.40 48.50,273.32 44.06,273.80 46.70,270.20 44.06,266.60 48.50,267.08" fill="#87cefa"/><polygon points="186.75,240.25 196.25,249.75 196.25,253.75 186.75,244.25 177.25,253.75 177.25,249.75" fill="#87cefa"/><rect x="185.15" y="243.25" width="3.3" height="19" fill="#87cefa"/><polygon points="178.30,247.20 180.10,251.28 184.54,250.80 181.90,254.40 184.54,258.00 180.10,257.52 178.30,261.60 176.50,257.52 172.06,258.00 174.70,254.40 172.06,250.80 176.50,251.28" fill="#87cefa"/><polygon points="514.75,157.1 524.25,166.6 524.25,170.6 514.75,161.1 505.25,170.6 505.25,166.6" fill="#87cefa"/><rect x="513.15" y="160.1" width="3.3" height="19" fill="#87cefa"/><polygon points="506.30,223.10 508.10,227.18 512.54,226.70 509.90,230.30 512.54,233.90 508.10,233.42 506.30,237.50 504.50,233.42 500.06,233.90 502.70,230.30 500.06,226.70 504.50,227.18" fill="#87cefa"/></g>
<clipPath id="c1"><rect x="11" y="290" width="667" height="127"/></clipPath>
<clipPath id="c2"><rect x="11" y="420" width="667" height="131"/></clipPath>
<g clip-path="url(#c1)"><polyline points="11.5,333.0 19.5,356.0 27.5,379.4 35.5,403.4 43.5,388.0 51.5,355.0 59.5,327.5 67.5,315.4 75.5,310.0 83.5,308.8 91.5,308.8 99.5,310.5 107.5,311.0 115.5,318.7 123.5,324.0 131.5,333.0 139.5,367.0 147.5,371.5 155.5,390.2 163.5,398.5 171.5,397.2 179.5,361.6 187.5,337.4 195.5,319.8 203.5,306.2 211.5,306.2 219.5,306.2 227.5,306.6 235.5,322.0 243.5,327.5 251.5,334.0 259.5,359.4 267.5,352.8 275.5,340.7 283.5,333.0 291.5,319.8 299.5,309.9 307.5,306.6 315.5,306.6 323.5,313.2 331.5,328.6 339.5,347.3 347.5,357.2 355.5,375.9 363.5,383.6 371.5,372.6 379.5,361.6 387.5,351.7 395.5,359.4 403.5,394.6 411.5,411.0 419.5,410.0 427.5,391.3 435.5,388.0 443.5,370.0 451.5,374.8 459.5,370.4 467.5,378.0 475.5,400.0 483.5,405.6 491.5,408.9 499.5,404.5 507.5,377.0 515.5,348.4 523.5,328.6 531.5,315.4 539.5,304.8 547.5,304.0 555.5,307.0 563.5,312.0 571.5,318.7 579.5,327.5 587.5,340.0 595.5,340.0 603.5,340.0 611.5,322.0 619.5,307.0 627.5,307.0 635.5,312.5 643.5,318.7 651.5,318.7 659.5,331.7 667.5,342.2 675.5,358.3" fill="none" stroke="#ff0000" stroke-width="2" stroke-linejoin="round"/><polyline points="11.5,309.0 19.5,310.0 27.5,310.5 35.5,311.0 43.5,311.0 51.5,311.0 59.5,311.0 67.5,311.0 75.5,310.5 83.5,309.0 91.5,309.0 99.5,308.0 107.5,308.4 115.5,309.0 123.5,310.0 131.5,310.5 139.5,310.5 147.5,315.0 155.5,317.6 163.5,320.2 171.5,322.0 179.5,321.0 187.5,317.6 195.5,317.0 203.5,316.5 211.5,316.5 219.5,316.5 227.5,316.5 235.5,317.6 243.5,318.0 251.5,319.8 259.5,321.0 267.5,320.9 275.5,320.9 283.5,318.7 291.5,316.5 299.5,315.4 307.5,313.2 315.5,308.8 323.5,307.7 331.5,306.6 339.5,307.0 347.5,307.7 355.5,308.8 363.5,309.9 371.5,312.1 379.5,313.6 387.5,315.8 395.5,317.6 403.5,320.9 411.5,324.2 419.5,328.1 427.5,333.0 435.5,338.5 443.5,345.0 451.5,353.9 459.5,362.7 467.5,372.6 475.5,383.6 483.5,394.6 491.5,406.7 499.5,406.7 507.5,394.6 515.5,380.3 523.5,371.5 531.5,362.7 539.5,356.0 547.5,349.5 555.5,342.9 563.5,336.3 571.5,330.8 579.5,326.4 587.5,323.1 595.5,319.8 603.5,316.5 611.5,314.3 619.5,311.0 627.5,309.2 635.5,307.7 643.5,306.6 651.5,306.6 659.5,305.7 667.5,305.7 675.5,305.7" fill="none" stroke="#00ffff" stroke-width="2" stroke-linejoin="round"/><polyline points="11.5,312.5 19.5,312.0 27.5,311.5 35.5,311.5 43.5,311.0 51.5,310.5 59.5,310.0 67.5,309.5 75.5,308.5 83.5,307.5 91.5,306.5 99.5,306.0 107.5,305.5 115.5,305.5 123.5,305.5 131.5,305.5 139.5,305.5 147.5,306.0 155.5,306.0 163.5,304.8 171.5,304.8 179.5,304.8 187.5,304.8 195.5,304.8 203.5,304.8 211.5,304.8 219.5,304.8 227.5,304.8 235.5,305.5 243.5,305.5 251.5,305.5 259.5,306.0 267.5,305.5 275.5,305.5 283.5,305.5 291.5,305.5 299.5,304.8 307.5,304.8 315.5,304.8 323.5,304.8 331.5,304.8 339.5,304.8 347.5,304.8 355.5,304.8 363.5,304.8 371.5,304.8 379.5,304.8 387.5,304.8 395.5,306.0 403.5,307.0 411.5,307.7 419.5,308.4 427.5,308.8 435.5,309.9 443.5,310.5 451.5,311.4 459.5,312.1 467.5,313.2 475.5,315.0 483.5,317.2 491.5,318.7 499.5,319.8 507.5,319.3 515.5,318.7 523.5,317.8 531.5,317.8 539.5,317.8 547.5,317.8 555.5,317.8 563.5,317.8 571.5,317.8 579.5,317.8 587.5,317.8 595.5,317.8 603.5,317.8 611.5,317.8 619.5,317.8 627.5,317.8 635.5,317.8 643.5,317.8 651.5,317.8 659.5,317.8 667.5,317.8 675.5,317.8" fill="none" stroke="#ffff00" stroke-width="2" stroke-linejoin="round"/></g>
<path d="M12 302h3v1h-3zM18 302h3v1h-3zM24 302h3v1h-3zM30 302h3v1h-3zM36 302h3v1h-3zM42 302h3v1h-3zM48 302h3v1h-3zM54 302h3v1h-3zM60 302h3v1h-3zM66 302h3v1h-3zM72 302h3v1h-3zM78 302h3v1h-3zM84 302h3v1h-3zM90 302h3v1h-3zM96 302h3v1h-3zM102 302h3v1h-3zM108 302h3v1h-3zM114 302h3v1h-3zM120 302h3v1h-3zM126 302h3v1h-3zM132 302h3v1h-3zM138 302h3v1h-3zM144 302h3v1h-3zM150 302h3v1h-3zM156 302h3v1h-3zM162 302h3v1h-3zM168 302h3v1h-3zM174 302h3v1h-3zM180 302h3v1h-3zM186 302h3v1h-3zM192 302h3v1h-3zM198 302h3v1h-3zM204 302h3v1h-3zM210 302h3v1h-3zM216 302h3v1h-3zM222 302h3v1h-3zM228 302h3v1h-3zM234 302h3v1h-3zM240 302h3v1h-3zM246 302h3v1h-3zM252 302h3v1h-3zM258 302h3v1h-3zM264 302h3v1h-3zM270 302h3v1h-3zM276 302h3v1h-3zM282 302h3v1h-3zM288 302h3v1h-3zM294 302h3v1h-3zM300 302h3v1h-3zM306 302h3v1h-3zM312 302h3v1h-3zM318 302h3v1h-3zM324 302h3v1h-3zM330 302h3v1h-3zM336 302h3v1h-3zM342 302h3v1h-3zM348 302h3v1h-3zM354 302h3v1h-3zM360 302h3v1h-3zM366 302h3v1h-3zM372 302h3v1h-3zM378 302h3v1h-3zM384 302h3v1h-3zM390 302h3v1h-3zM396 302h3v1h-3zM402 302h3v1h-3zM408 302h3v1h-3zM414 302h3v1h-3zM420 302h3v1h-3zM426 302h3v1h-3zM432 302h3v1h-3zM438 302h3v1h-3zM444 302h3v1h-3zM450 302h3v1h-3zM456 302h3v1h-3zM462 302h3v1h-3zM468 302h3v1h-3zM474 302h3v1h-3zM480 302h3v1h-3zM486 302h3v1h-3zM492 302h3v1h-3zM498 302h3v1h-3zM504 302h3v1h-3zM510 302h3v1h-3zM516 302h3v1h-3zM522 302h3v1h-3zM528 302h3v1h-3zM534 302h3v1h-3zM540 302h3v1h-3zM546 302h3v1h-3zM552 302h3v1h-3zM558 302h3v1h-3zM564 302h3v1h-3zM570 302h3v1h-3zM576 302h3v1h-3zM582 302h3v1h-3zM588 302h3v1h-3zM594 302h3v1h-3zM600 302h3v1h-3zM606 302h3v1h-3zM612 302h3v1h-3zM618 302h3v1h-3zM624 302h3v1h-3zM630 302h3v1h-3zM636 302h3v1h-3zM642 302h3v1h-3zM648 302h3v1h-3zM654 302h3v1h-3zM660 302h3v1h-3zM666 302h3v1h-3zM672 302h3v1h-3zM12 313h3v1h-3zM18 313h3v1h-3zM24 313h3v1h-3zM30 313h3v1h-3zM36 313h3v1h-3zM42 313h3v1h-3zM48 313h3v1h-3zM54 313h3v1h-3zM60 313h3v1h-3zM66 313h3v1h-3zM72 313h3v1h-3zM78 313h3v1h-3zM84 313h3v1h-3zM90 313h3v1h-3zM96 313h3v1h-3zM102 313h3v1h-3zM108 313h3v1h-3zM114 313h3v1h-3zM120 313h3v1h-3zM126 313h3v1h-3zM132 313h3v1h-3zM138 313h3v1h-3zM144 313h3v1h-3zM150 313h3v1h-3zM156 313h3v1h-3zM162 313h3v1h-3zM168 313h3v1h-3zM174 313h3v1h-3zM180 313h3v1h-3zM186 313h3v1h-3zM192 313h3v1h-3zM198 313h3v1h-3zM204 313h3v1h-3zM210 313h3v1h-3zM216 313h3v1h-3zM222 313h3v1h-3zM228 313h3v1h-3zM234 313h3v1h-3zM240 313h3v1h-3zM246 313h3v1h-3zM252 313h3v1h-3zM258 313h3v1h-3zM264 313h3v1h-3zM270 313h3v1h-3zM276 313h3v1h-3zM282 313h3v1h-3zM288 313h3v1h-3zM294 313h3v1h-3zM300 313h3v1h-3zM306 313h3v1h-3zM312 313h3v1h-3zM318 313h3v1h-3zM324 313h3v1h-3zM330 313h3v1h-3zM336 313h3v1h-3zM342 313h3v1h-3zM348 313h3v1h-3zM354 313h3v1h-3zM360 313h3v1h-3zM366 313h3v1h-3zM372 313h3v1h-3zM378 313h3v1h-3zM384 313h3v1h-3zM390 313h3v1h-3zM396 313h3v1h-3zM402 313h3v1h-3zM408 313h3v1h-3zM414 313h3v1h-3zM420 313h3v1h-3zM426 313h3v1h-3zM432 313h3v1h-3zM438 313h3v1h-3zM444 313h3v1h-3zM450 313h3v1h-3zM456 313h3v1h-3zM462 313h3v1h-3zM468 313h3v1h-3zM474 313h3v1h-3zM480 313h3v1h-3zM486 313h3v1h-3zM492 313h3v1h-3zM498 313h3v1h-3zM504 313h3v1h-3zM510 313h3v1h-3zM516 313h3v1h-3zM522 313h3v1h-3zM528 313h3v1h-3zM534 313h3v1h-3zM540 313h3v1h-3zM546 313h3v1h-3zM552 313h3v1h-3zM558 313h3v1h-3zM564 313h3v1h-3zM570 313h3v1h-3zM576 313h3v1h-3zM582 313h3v1h-3zM588 313h3v1h-3zM594 313h3v1h-3zM600 313h3v1h-3zM606 313h3v1h-3zM612 313h3v1h-3zM618 313h3v1h-3zM624 313h3v1h-3zM630 313h3v1h-3zM636 313h3v1h-3zM642 313h3v1h-3zM648 313h3v1h-3zM654 313h3v1h-3zM660 313h3v1h-3zM666 313h3v1h-3zM672 313h3v1h-3zM12 331h3v1h-3zM18 331h3v1h-3zM24 331h3v1h-3zM30 331h3v1h-3zM36 331h3v1h-3zM42 331h3v1h-3zM48 331h3v1h-3zM54 331h3v1h-3zM60 331h3v1h-3zM66 331h3v1h-3zM72 331h3v1h-3zM78 331h3v1h-3zM84 331h3v1h-3zM90 331h3v1h-3zM96 331h3v1h-3zM102 331h3v1h-3zM108 331h3v1h-3zM114 331h3v1h-3zM120 331h3v1h-3zM126 331h3v1h-3zM132 331h3v1h-3zM138 331h3v1h-3zM144 331h3v1h-3zM150 331h3v1h-3zM156 331h3v1h-3zM162 331h3v1h-3zM168 331h3v1h-3zM174 331h3v1h-3zM180 331h3v1h-3zM186 331h3v1h-3zM192 331h3v1h-3zM198 331h3v1h-3zM204 331h3v1h-3zM210 331h3v1h-3zM216 331h3v1h-3zM222 331h3v1h-3zM228 331h3v1h-3zM234 331h3v1h-3zM240 331h3v1h-3zM246 331h3v1h-3zM252 331h3v1h-3zM258 331h3v1h-3zM264 331h3v1h-3zM270 331h3v1h-3zM276 331h3v1h-3zM282 331h3v1h-3zM288 331h3v1h-3zM294 331h3v1h-3zM300 331h3v1h-3zM306 331h3v1h-3zM312 331h3v1h-3zM318 331h3v1h-3zM324 331h3v1h-3zM330 331h3v1h-3zM336 331h3v1h-3zM342 331h3v1h-3zM348 331h3v1h-3zM354 331h3v1h-3zM360 331h3v1h-3zM366 331h3v1h-3zM372 331h3v1h-3zM378 331h3v1h-3zM384 331h3v1h-3zM390 331h3v1h-3zM396 331h3v1h-3zM402 331h3v1h-3zM408 331h3v1h-3zM414 331h3v1h-3zM420 331h3v1h-3zM426 331h3v1h-3zM432 331h3v1h-3zM438 331h3v1h-3zM444 331h3v1h-3zM450 331h3v1h-3zM456 331h3v1h-3zM462 331h3v1h-3zM468 331h3v1h-3zM474 331h3v1h-3zM480 331h3v1h-3zM486 331h3v1h-3zM492 331h3v1h-3zM498 331h3v1h-3zM504 331h3v1h-3zM510 331h3v1h-3zM516 331h3v1h-3zM522 331h3v1h-3zM528 331h3v1h-3zM534 331h3v1h-3zM540 331h3v1h-3zM546 331h3v1h-3zM552 331h3v1h-3zM558 331h3v1h-3zM564 331h3v1h-3zM570 331h3v1h-3zM576 331h3v1h-3zM582 331h3v1h-3zM588 331h3v1h-3zM594 331h3v1h-3zM600 331h3v1h-3zM606 331h3v1h-3zM612 331h3v1h-3zM618 331h3v1h-3zM624 331h3v1h-3zM630 331h3v1h-3zM636 331h3v1h-3zM642 331h3v1h-3zM648 331h3v1h-3zM654 331h3v1h-3zM660 331h3v1h-3zM666 331h3v1h-3zM672 331h3v1h-3zM12 359h3v1h-3zM18 359h3v1h-3zM24 359h3v1h-3zM30 359h3v1h-3zM36 359h3v1h-3zM42 359h3v1h-3zM48 359h3v1h-3zM54 359h3v1h-3zM60 359h3v1h-3zM66 359h3v1h-3zM72 359h3v1h-3zM78 359h3v1h-3zM84 359h3v1h-3zM90 359h3v1h-3zM96 359h3v1h-3zM102 359h3v1h-3zM108 359h3v1h-3zM114 359h3v1h-3zM120 359h3v1h-3zM126 359h3v1h-3zM132 359h3v1h-3zM138 359h3v1h-3zM144 359h3v1h-3zM150 359h3v1h-3zM156 359h3v1h-3zM162 359h3v1h-3zM168 359h3v1h-3zM174 359h3v1h-3zM180 359h3v1h-3zM186 359h3v1h-3zM192 359h3v1h-3zM198 359h3v1h-3zM204 359h3v1h-3zM210 359h3v1h-3zM216 359h3v1h-3zM222 359h3v1h-3zM228 359h3v1h-3zM234 359h3v1h-3zM240 359h3v1h-3zM246 359h3v1h-3zM252 359h3v1h-3zM258 359h3v1h-3zM264 359h3v1h-3zM270 359h3v1h-3zM276 359h3v1h-3zM282 359h3v1h-3zM288 359h3v1h-3zM294 359h3v1h-3zM300 359h3v1h-3zM306 359h3v1h-3zM312 359h3v1h-3zM318 359h3v1h-3zM324 359h3v1h-3zM330 359h3v1h-3zM336 359h3v1h-3zM342 359h3v1h-3zM348 359h3v1h-3zM354 359h3v1h-3zM360 359h3v1h-3zM366 359h3v1h-3zM372 359h3v1h-3zM378 359h3v1h-3zM384 359h3v1h-3zM390 359h3v1h-3zM396 359h3v1h-3zM402 359h3v1h-3zM408 359h3v1h-3zM414 359h3v1h-3zM420 359h3v1h-3zM426 359h3v1h-3zM432 359h3v1h-3zM438 359h3v1h-3zM444 359h3v1h-3zM450 359h3v1h-3zM456 359h3v1h-3zM462 359h3v1h-3zM468 359h3v1h-3zM474 359h3v1h-3zM480 359h3v1h-3zM486 359h3v1h-3zM492 359h3v1h-3zM498 359h3v1h-3zM504 359h3v1h-3zM510 359h3v1h-3zM516 359h3v1h-3zM522 359h3v1h-3zM528 359h3v1h-3zM534 359h3v1h-3zM540 359h3v1h-3zM546 359h3v1h-3zM552 359h3v1h-3zM558 359h3v1h-3zM564 359h3v1h-3zM570 359h3v1h-3zM576 359h3v1h-3zM582 359h3v1h-3zM588 359h3v1h-3zM594 359h3v1h-3zM600 359h3v1h-3zM606 359h3v1h-3zM612 359h3v1h-3zM618 359h3v1h-3zM624 359h3v1h-3zM630 359h3v1h-3zM636 359h3v1h-3zM642 359h3v1h-3zM648 359h3v1h-3zM654 359h3v1h-3zM660 359h3v1h-3zM666 359h3v1h-3zM672 359h3v1h-3zM12 388h3v1h-3zM18 388h3v1h-3zM24 388h3v1h-3zM30 388h3v1h-3zM36 388h3v1h-3zM42 388h3v1h-3zM48 388h3v1h-3zM54 388h3v1h-3zM60 388h3v1h-3zM66 388h3v1h-3zM72 388h3v1h-3zM78 388h3v1h-3zM84 388h3v1h-3zM90 388h3v1h-3zM96 388h3v1h-3zM102 388h3v1h-3zM108 388h3v1h-3zM114 388h3v1h-3zM120 388h3v1h-3zM126 388h3v1h-3zM132 388h3v1h-3zM138 388h3v1h-3zM144 388h3v1h-3zM150 388h3v1h-3zM156 388h3v1h-3zM162 388h3v1h-3zM168 388h3v1h-3zM174 388h3v1h-3zM180 388h3v1h-3zM186 388h3v1h-3zM192 388h3v1h-3zM198 388h3v1h-3zM204 388h3v1h-3zM210 388h3v1h-3zM216 388h3v1h-3zM222 388h3v1h-3zM228 388h3v1h-3zM234 388h3v1h-3zM240 388h3v1h-3zM246 388h3v1h-3zM252 388h3v1h-3zM258 388h3v1h-3zM264 388h3v1h-3zM270 388h3v1h-3zM276 388h3v1h-3zM282 388h3v1h-3zM288 388h3v1h-3zM294 388h3v1h-3zM300 388h3v1h-3zM306 388h3v1h-3zM312 388h3v1h-3zM318 388h3v1h-3zM324 388h3v1h-3zM330 388h3v1h-3zM336 388h3v1h-3zM342 388h3v1h-3zM348 388h3v1h-3zM354 388h3v1h-3zM360 388h3v1h-3zM366 388h3v1h-3zM372 388h3v1h-3zM378 388h3v1h-3zM384 388h3v1h-3zM390 388h3v1h-3zM396 388h3v1h-3zM402 388h3v1h-3zM408 388h3v1h-3zM414 388h3v1h-3zM420 388h3v1h-3zM426 388h3v1h-3zM432 388h3v1h-3zM438 388h3v1h-3zM444 388h3v1h-3zM450 388h3v1h-3zM456 388h3v1h-3zM462 388h3v1h-3zM468 388h3v1h-3zM474 388h3v1h-3zM480 388h3v1h-3zM486 388h3v1h-3zM492 388h3v1h-3zM498 388h3v1h-3zM504 388h3v1h-3zM510 388h3v1h-3zM516 388h3v1h-3zM522 388h3v1h-3zM528 388h3v1h-3zM534 388h3v1h-3zM540 388h3v1h-3zM546 388h3v1h-3zM552 388h3v1h-3zM558 388h3v1h-3zM564 388h3v1h-3zM570 388h3v1h-3zM576 388h3v1h-3zM582 388h3v1h-3zM588 388h3v1h-3zM594 388h3v1h-3zM600 388h3v1h-3zM606 388h3v1h-3zM612 388h3v1h-3zM618 388h3v1h-3zM624 388h3v1h-3zM630 388h3v1h-3zM636 388h3v1h-3zM642 388h3v1h-3zM648 388h3v1h-3zM654 388h3v1h-3zM660 388h3v1h-3zM666 388h3v1h-3zM672 388h3v1h-3zM12 405h3v1h-3zM18 405h3v1h-3zM24 405h3v1h-3zM30 405h3v1h-3zM36 405h3v1h-3zM42 405h3v1h-3zM48 405h3v1h-3zM54 405h3v1h-3zM60 405h3v1h-3zM66 405h3v1h-3zM72 405h3v1h-3zM78 405h3v1h-3zM84 405h3v1h-3zM90 405h3v1h-3zM96 405h3v1h-3zM102 405h3v1h-3zM108 405h3v1h-3zM114 405h3v1h-3zM120 405h3v1h-3zM126 405h3v1h-3zM132 405h3v1h-3zM138 405h3v1h-3zM144 405h3v1h-3zM150 405h3v1h-3zM156 405h3v1h-3zM162 405h3v1h-3zM168 405h3v1h-3zM174 405h3v1h-3zM180 405h3v1h-3zM186 405h3v1h-3zM192 405h3v1h-3zM198 405h3v1h-3zM204 405h3v1h-3zM210 405h3v1h-3zM216 405h3v1h-3zM222 405h3v1h-3zM228 405h3v1h-3zM234 405h3v1h-3zM240 405h3v1h-3zM246 405h3v1h-3zM252 405h3v1h-3zM258 405h3v1h-3zM264 405h3v1h-3zM270 405h3v1h-3zM276 405h3v1h-3zM282 405h3v1h-3zM288 405h3v1h-3zM294 405h3v1h-3zM300 405h3v1h-3zM306 405h3v1h-3zM312 405h3v1h-3zM318 405h3v1h-3zM324 405h3v1h-3zM330 405h3v1h-3zM336 405h3v1h-3zM342 405h3v1h-3zM348 405h3v1h-3zM354 405h3v1h-3zM360 405h3v1h-3zM366 405h3v1h-3zM372 405h3v1h-3zM378 405h3v1h-3zM384 405h3v1h-3zM390 405h3v1h-3zM396 405h3v1h-3zM402 405h3v1h-3zM408 405h3v1h-3zM414 405h3v1h-3zM420 405h3v1h-3zM426 405h3v1h-3zM432 405h3v1h-3zM438 405h3v1h-3zM444 405h3v1h-3zM450 405h3v1h-3zM456 405h3v1h-3zM462 405h3v1h-3zM468 405h3v1h-3zM474 405h3v1h-3zM480 405h3v1h-3zM486 405h3v1h-3zM492 405h3v1h-3zM498 405h3v1h-3zM504 405h3v1h-3zM510 405h3v1h-3zM516 405h3v1h-3zM522 405h3v1h-3zM528 405h3v1h-3zM534 405h3v1h-3zM540 405h3v1h-3zM546 405h3v1h-3zM552 405h3v1h-3zM558 405h3v1h-3zM564 405h3v1h-3zM570 405h3v1h-3zM576 405h3v1h-3zM582 405h3v1h-3zM588 405h3v1h-3zM594 405h3v1h-3zM600 405h3v1h-3zM606 405h3v1h-3zM612 405h3v1h-3zM618 405h3v1h-3zM624 405h3v1h-3zM630 405h3v1h-3zM636 405h3v1h-3zM642 405h3v1h-3zM648 405h3v1h-3zM654 405h3v1h-3zM660 405h3v1h-3zM666 405h3v1h-3zM672 405h3v1h-3z" fill="#c0c0c0"/>
<g clip-path="url(#c2)"><path d="M10 485h3v58h-3zM18 487h3v56h-3zM26 489h3v54h-3zM34 490h3v53h-3zM42 491h3v52h-3zM50 490h3v53h-3zM58 491h3v52h-3zM66 493h3v50h-3zM74 490h3v53h-3zM82 487h3v56h-3zM90 486h3v57h-3zM98 486h3v57h-3zM106 483h3v60h-3zM114 485h3v58h-3zM122 486h3v57h-3zM130 486h3v57h-3zM138 494h3v49h-3zM146 501h3v42h-3zM154 505h3v38h-3zM162 509h3v34h-3zM170 511h3v32h-3zM178 509h3v34h-3zM186 507h3v36h-3zM194 507h3v36h-3zM202 506h3v37h-3zM210 508h3v35h-3zM218 508h3v35h-3zM226 505h3v38h-3zM234 508h3v35h-3zM242 508h3v35h-3zM250 510h3v33h-3zM258 512h3v31h-3zM266 511h3v32h-3zM274 509h3v34h-3zM282 508h3v35h-3zM290 503h3v40h-3zM298 498h3v45h-3zM306 492h3v51h-3zM314 492h3v51h-3zM322 493h3v50h-3zM330 497h3v46h-3zM338 500h3v43h-3zM346 500h3v43h-3zM354 501h3v42h-3zM362 502h3v41h-3zM370 504h3v39h-3zM378 507h3v36h-3zM386 510h3v33h-3zM394 513h3v30h-3zM402 517h3v26h-3zM410 519h3v24h-3zM418 522h3v21h-3zM426 522h3v21h-3zM434 525h3v18h-3zM442 526h3v17h-3zM450 530h3v13h-3zM458 531h3v12h-3zM466 533h3v10h-3zM474 537h3v6h-3zM482 541h3v2h-3zM490 543h3v3h-3zM498 543h3v3h-3zM506 527h3v16h-3zM514 508h3v35h-3zM522 487h3v56h-3zM530 469h3v74h-3zM538 452h3v91h-3zM546 440h3v103h-3zM554 434h3v109h-3zM562 431h3v112h-3zM570 428h3v115h-3zM578 427h3v116h-3zM586 428h3v115h-3zM594 428h3v115h-3zM602 428h3v115h-3zM610 426h3v117h-3zM618 427h3v116h-3zM626 428h3v115h-3zM634 431h3v112h-3zM642 436h3v107h-3zM650 438h3v105h-3zM658 443h3v100h-3zM666 447h3v96h-3zM674 451h3v92h-3z" fill="#c0c0c0"/><polyline points="11.5,495.5 19.5,493.5 27.5,491.5 35.5,490.0 43.5,488.0 51.5,487.0 59.5,488.2 67.5,489.3 75.5,490.0 83.5,490.0 91.5,490.0 99.5,490.0 107.5,488.6 115.5,488.6 123.5,487.0 131.5,486.6 139.5,487.0 147.5,488.2 155.5,490.4 163.5,493.7 171.5,495.9 179.5,498.7 187.5,501.0 195.5,502.5 203.5,504.7 211.5,506.9 219.5,506.9 227.5,506.9 235.5,506.9 243.5,506.9 251.5,507.5 259.5,508.0 267.5,508.0 275.5,508.6 283.5,509.0 291.5,508.6 299.5,507.5 307.5,506.2 315.5,504.7 323.5,502.5 331.5,500.3 339.5,499.6 347.5,498.7 355.5,497.4 363.5,497.0 371.5,498.0 379.5,500.3 387.5,502.5 395.5,504.0 403.5,505.8 411.5,508.0 419.5,511.3 427.5,513.5 435.5,516.3 443.5,518.5 451.5,520.7 459.5,523.4 467.5,525.6 475.5,528.0 483.5,530.5 491.5,532.6 499.5,534.8 507.5,534.8 515.5,532.2 523.5,527.8 531.5,521.2 539.5,513.5 547.5,503.6 555.5,491.5 563.5,478.3 571.5,465.1 579.5,454.1 587.5,445.3 595.5,437.6 603.5,433.6 611.5,430.6 619.5,428.4 627.5,427.9 635.5,427.9 643.5,429.2 651.5,430.5 659.5,432.1 667.5,433.9 675.5,435.8" fill="none" stroke="#ff0000" stroke-width="2" stroke-linejoin="round"/></g>
<path d="M12 543h3v1h-3zM18 543h3v1h-3zM24 543h3v1h-3zM30 543h3v1h-3zM36 543h3v1h-3zM42 543h3v1h-3zM48 543h3v1h-3zM54 543h3v1h-3zM60 543h3v1h-3zM66 543h3v1h-3zM72 543h3v1h-3zM78 543h3v1h-3zM84 543h3v1h-3zM90 543h3v1h-3zM96 543h3v1h-3zM102 543h3v1h-3zM108 543h3v1h-3zM114 543h3v1h-3zM120 543h3v1h-3zM126 543h3v1h-3zM132 543h3v1h-3zM138 543h3v1h-3zM144 543h3v1h-3zM150 543h3v1h-3zM156 543h3v1h-3zM162 543h3v1h-3zM168 543h3v1h-3zM174 543h3v1h-3zM180 543h3v1h-3zM186 543h3v1h-3zM192 543h3v1h-3zM198 543h3v1h-3zM204 543h3v1h-3zM210 543h3v1h-3zM216 543h3v1h-3zM222 543h3v1h-3zM228 543h3v1h-3zM234 543h3v1h-3zM240 543h3v1h-3zM246 543h3v1h-3zM252 543h3v1h-3zM258 543h3v1h-3zM264 543h3v1h-3zM270 543h3v1h-3zM276 543h3v1h-3zM282 543h3v1h-3zM288 543h3v1h-3zM294 543h3v1h-3zM300 543h3v1h-3zM306 543h3v1h-3zM312 543h3v1h-3zM318 543h3v1h-3zM324 543h3v1h-3zM330 543h3v1h-3zM336 543h3v1h-3zM342 543h3v1h-3zM348 543h3v1h-3zM354 543h3v1h-3zM360 543h3v1h-3zM366 543h3v1h-3zM372 543h3v1h-3zM378 543h3v1h-3zM384 543h3v1h-3zM390 543h3v1h-3zM396 543h3v1h-3zM402 543h3v1h-3zM408 543h3v1h-3zM414 543h3v1h-3zM420 543h3v1h-3zM426 543h3v1h-3zM432 543h3v1h-3zM438 543h3v1h-3zM444 543h3v1h-3zM450 543h3v1h-3zM456 543h3v1h-3zM462 543h3v1h-3zM468 543h3v1h-3zM474 543h3v1h-3zM480 543h3v1h-3zM486 543h3v1h-3zM492 543h3v1h-3zM498 543h3v1h-3zM504 543h3v1h-3zM510 543h3v1h-3zM516 543h3v1h-3zM522 543h3v1h-3zM528 543h3v1h-3zM534 543h3v1h-3zM540 543h3v1h-3zM546 543h3v1h-3zM552 543h3v1h-3zM558 543h3v1h-3zM564 543h3v1h-3zM570 543h3v1h-3zM576 543h3v1h-3zM582 543h3v1h-3zM588 543h3v1h-3zM594 543h3v1h-3zM600 543h3v1h-3zM606 543h3v1h-3zM612 543h3v1h-3zM618 543h3v1h-3zM624 543h3v1h-3zM630 543h3v1h-3zM636 543h3v1h-3zM642 543h3v1h-3zM648 543h3v1h-3zM654 543h3v1h-3zM660 543h3v1h-3zM666 543h3v1h-3zM672 543h3v1h-3z" fill="#778899"/>
<path d="M11 546h1v1h1v1h1v1h1v1h1v1h-5z" fill="#778899"/>
<path d="M679 53h2v1h-2zM679 86h2v1h-2zM679 119h2v1h-2zM679 152h2v1h-2zM679 185h2v1h-2zM679 218h2v1h-2zM679 251h2v1h-2zM679 284h2v1h-2zM679 291h1v1h-1zM679 416h1v1h-1zM679 421h1v1h-1zM679 543h1v1h-1zM679 550h1v1h-1zM11 552h1v3h-1zM75 552h1v3h-1zM139 552h1v3h-1zM203 552h1v3h-1zM267 552h1v3h-1zM331 552h1v3h-1zM395 552h1v3h-1zM459 552h1v3h-1zM523 552h1v3h-1zM587 552h1v3h-1zM651 552h1v3h-1z" fill="#ffffff"/>
<g shape-rendering="geometricPrecision"><text x="683.8" y="57" font-size="9.8" fill="#ffffff" textLength="33.6" lengthAdjust="spacingAndGlyphs">1.14740</text>
<text x="683.8" y="90" font-size="9.8" fill="#ffffff" textLength="33.6" lengthAdjust="spacingAndGlyphs">1.14350</text>
<text x="683.8" y="123" font-size="9.8" fill="#ffffff" textLength="33.6" lengthAdjust="spacingAndGlyphs">1.13970</text>
<text x="683.8" y="156" font-size="9.8" fill="#ffffff" textLength="33.6" lengthAdjust="spacingAndGlyphs">1.13590</text>
<text x="683.8" y="189" font-size="9.8" fill="#ffffff" textLength="33.6" lengthAdjust="spacingAndGlyphs">1.13210</text>
<text x="683.8" y="222" font-size="9.8" fill="#ffffff" textLength="33.6" lengthAdjust="spacingAndGlyphs">1.12830</text>
<text x="683.8" y="255" font-size="9.8" fill="#ffffff" textLength="33.6" lengthAdjust="spacingAndGlyphs">1.12450</text>
<text x="683.8" y="288" font-size="9.8" fill="#ffffff" textLength="33.6" lengthAdjust="spacingAndGlyphs">1.12070</text>
<text x="682" y="300" font-size="9.8" fill="#ffffff" textLength="14.5" lengthAdjust="spacingAndGlyphs">120</text>
<text x="681.2" y="306" font-size="9.8" fill="#ffffff" textLength="14.8" lengthAdjust="spacingAndGlyphs">100</text>
<text x="681.2" y="317" font-size="9.8" fill="#ffffff" textLength="9.8" lengthAdjust="spacingAndGlyphs">80</text>
<text x="681.2" y="335" font-size="9.8" fill="#ffffff" textLength="9.8" lengthAdjust="spacingAndGlyphs">50</text>
<text x="681.6" y="363" font-size="9.8" fill="#ffffff" textLength="18.2" lengthAdjust="spacingAndGlyphs">0.00</text>
<text x="680.6" y="392" font-size="9.8" fill="#ffffff" textLength="13.6" lengthAdjust="spacingAndGlyphs">-50</text>
<text x="680.6" y="408.3" font-size="9.8" fill="#ffffff" textLength="13.6" lengthAdjust="spacingAndGlyphs">-80</text>
<text x="681.8" y="414" font-size="9.8" fill="#ffffff" textLength="18.2" lengthAdjust="spacingAndGlyphs">-100</text>
<text x="682" y="429.7" font-size="9.8" fill="#ffffff" textLength="37.4" lengthAdjust="spacingAndGlyphs">0.004202</text>
<text x="681.8" y="546.5" font-size="9.8" fill="#ffffff" textLength="18.2" lengthAdjust="spacingAndGlyphs">0.00</text>
<text x="685.2" y="548" font-size="9.8" fill="#ffffff" textLength="37.4" lengthAdjust="spacingAndGlyphs">0.000244</text>
<text x="10.2" y="564" font-size="9.8" fill="#ffffff" textLength="46.6" lengthAdjust="spacingAndGlyphs">1 Feb 2022</text>
<text x="74.2" y="564" font-size="9.8" fill="#ffffff" textLength="49.2" lengthAdjust="spacingAndGlyphs">1 Feb 09:00</text>
<text x="138.2" y="564" font-size="9.8" fill="#ffffff" textLength="49.2" lengthAdjust="spacingAndGlyphs">1 Feb 17:00</text>
<text x="202.2" y="564" font-size="9.8" fill="#ffffff" textLength="49.2" lengthAdjust="spacingAndGlyphs">2 Feb 01:00</text>
<text x="266.2" y="564" font-size="9.8" fill="#ffffff" textLength="49.2" lengthAdjust="spacingAndGlyphs">2 Feb 09:00</text>
<text x="330.2" y="564" font-size="9.8" fill="#ffffff" textLength="49.2" lengthAdjust="spacingAndGlyphs">2 Feb 17:00</text>
<text x="394.2" y="564" font-size="9.8" fill="#ffffff" textLength="49.2" lengthAdjust="spacingAndGlyphs">3 Feb 01:00</text>
<text x="458.2" y="564" font-size="9.8" fill="#ffffff" textLength="49.2" lengthAdjust="spacingAndGlyphs">3 Feb 09:00</text>
<text x="522.2" y="564" font-size="9.8" fill="#ffffff" textLength="49.2" lengthAdjust="spacingAndGlyphs">3 Feb 17:00</text>
<text x="586.2" y="564" font-size="9.8" fill="#ffffff" textLength="49.2" lengthAdjust="spacingAndGlyphs">4 Feb 01:00</text>
<text x="650.2" y="564" font-size="9.8" fill="#ffffff" textLength="49.2" lengthAdjust="spacingAndGlyphs">4 Feb 09:00</text>
<text x="26.4" y="45" font-size="9.8" fill="#ffffff" textLength="53.4" lengthAdjust="spacingAndGlyphs">EURUSD,H1</text>
<text x="85.4" y="45" font-size="9.8" fill="#ffffff" textLength="33.6" lengthAdjust="spacingAndGlyphs">0.97050</text>
<text x="122" y="45" font-size="9.8" fill="#ffffff" textLength="33.6" lengthAdjust="spacingAndGlyphs">0.97082</text>
<text x="157.5" y="45" font-size="9.8" fill="#ffffff" textLength="33.6" lengthAdjust="spacingAndGlyphs">0.96942</text>
<text x="193.7" y="45" font-size="9.8" fill="#ffffff" textLength="33.6" lengthAdjust="spacingAndGlyphs">0.97022</text>
<text x="14.2" y="301.4" font-size="9.8" fill="#ffffff" textLength="109" lengthAdjust="spacingAndGlyphs">R(9,26,52) -65.0 -22.0 29.8</text>
<text x="15.4" y="432" font-size="9.8" fill="#ffffff" textLength="153.4" lengthAdjust="spacingAndGlyphs">MACD(12,26,9) -0.000156 -0.000101</text></g>
</svg>
</div></body></html>
